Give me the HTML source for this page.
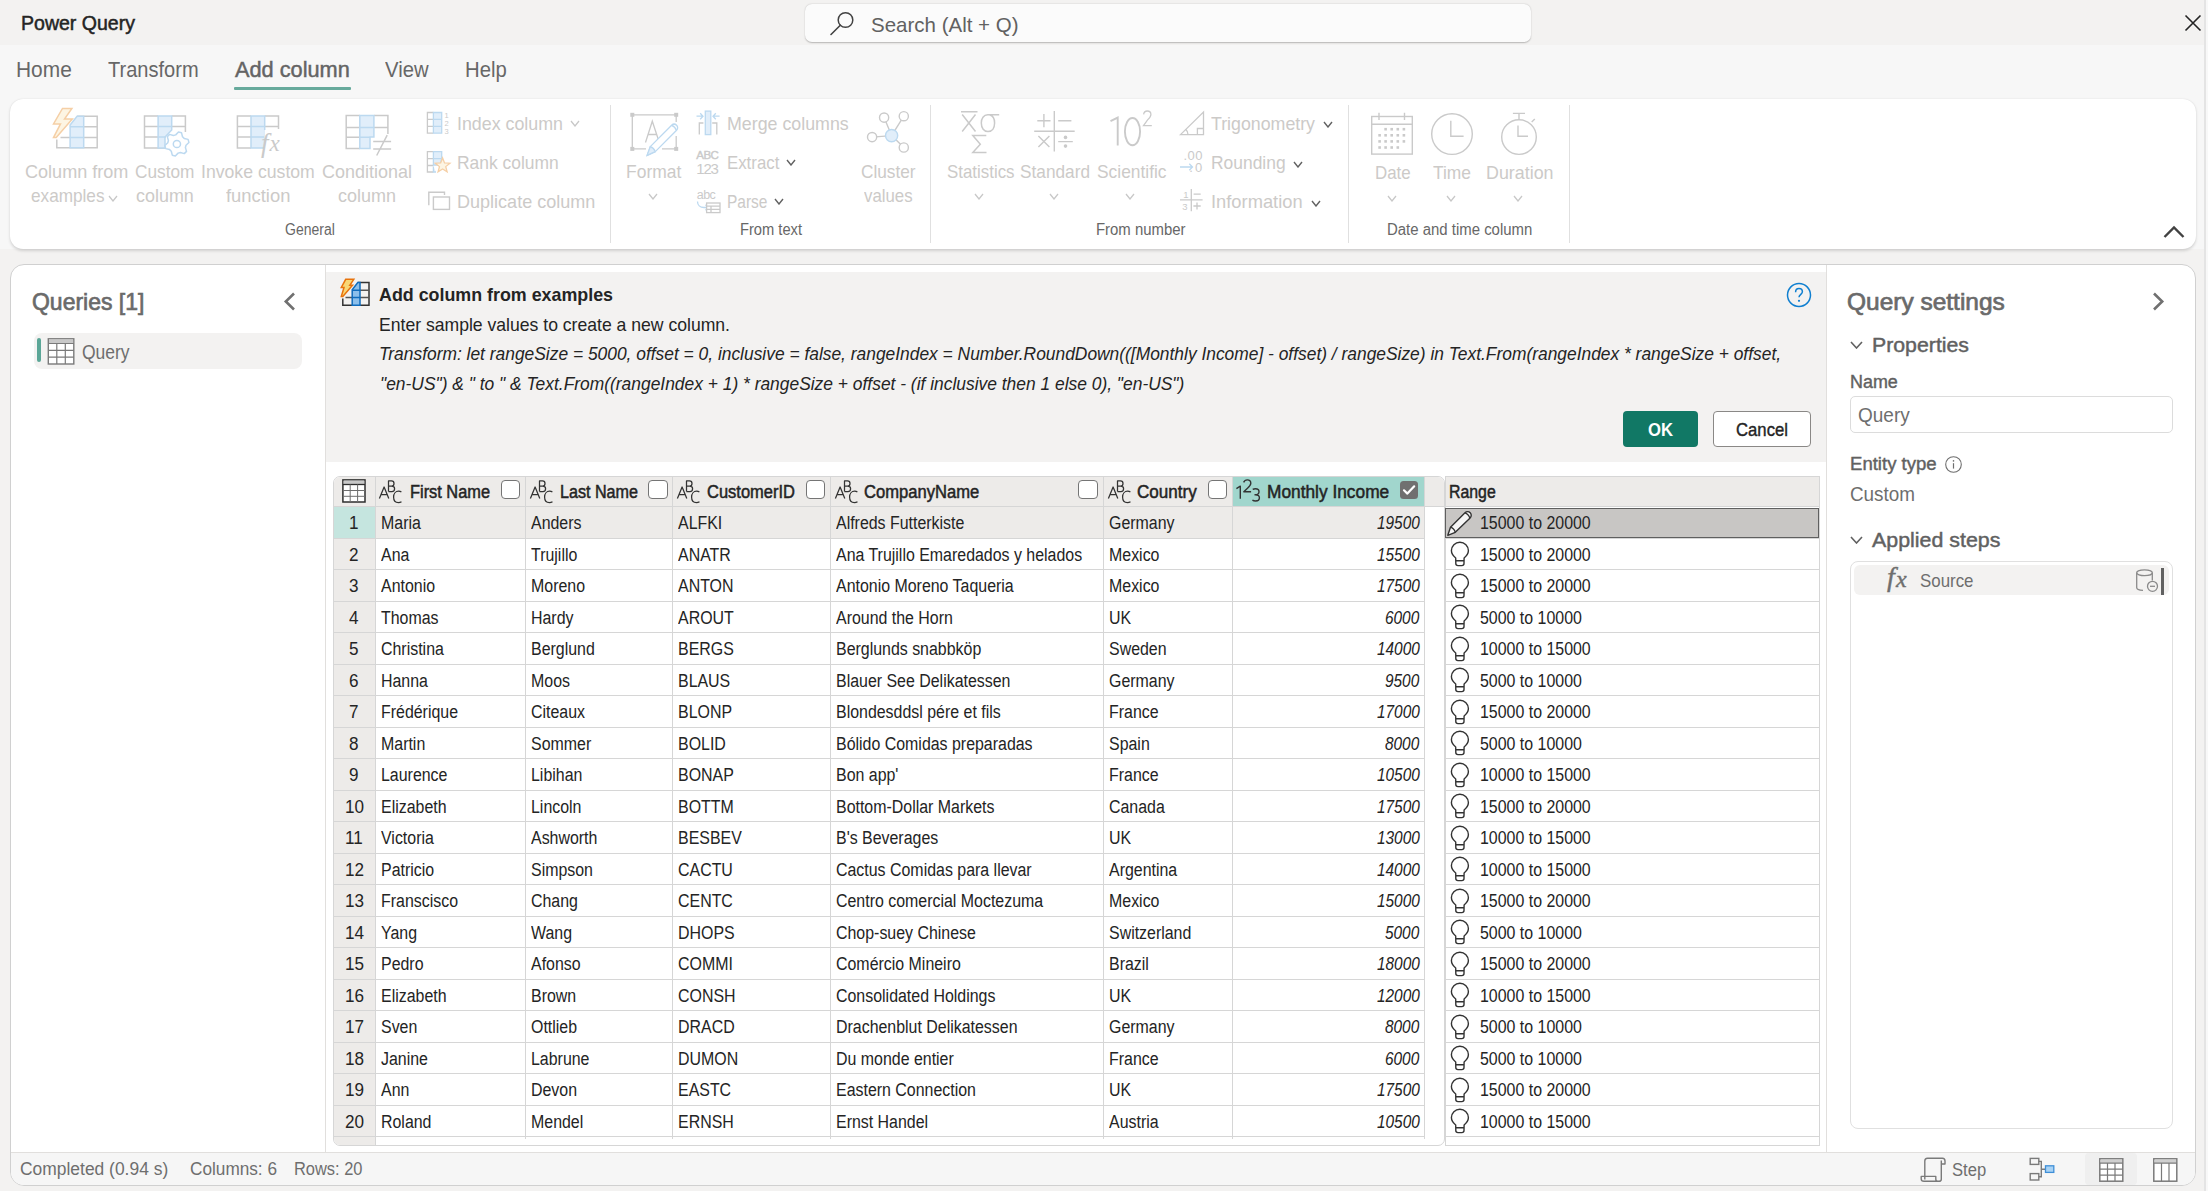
<!DOCTYPE html><html><head><meta charset="utf-8"><title>Power Query</title><style>
*{margin:0;padding:0}
html,body{width:2208px;height:1191px;overflow:hidden;background:#f3f2f1}
body{position:relative;font-family:"Liberation Sans",sans-serif}
body>div,body>svg{position:absolute}
.t{white-space:nowrap;line-height:1.117}
</style></head><body><div style="left:0.00px;top:0.00px;width:2208.00px;height:45.00px;background:#f3f2f1"></div>
<div style="left:0.00px;top:45.00px;width:2208.00px;height:204.00px;background:#f7f7f7"></div>
<div style="left:0.00px;top:249.00px;width:2208.00px;height:942.00px;background:#f3f2f1"></div>
<div style="left:2204.00px;top:0.00px;width:1.60px;height:1191.00px;background:#e4e4e4"></div>
<div style="left:2205.60px;top:0.00px;width:2.40px;height:1191.00px;background:#f8f8f8"></div>
<div class="t" style="left:21.00px;top:12.00px;font-size:20px;color:#242424;transform:scaleX(0.9768);transform-origin:0 0;-webkit-text-stroke:0.5px #242424;">Power Query</div>
<div style="left:804.50px;top:3.50px;width:726.00px;height:38.50px;background:#fbfbfb;border-radius:7px;box-shadow:0 0.5px 1.5px rgba(0,0,0,0.25);"></div>
<div class="t" style="left:871.00px;top:13.40px;font-size:21px;color:#616161;transform:scaleX(0.9760);transform-origin:0 0;">Search (Alt + Q)</div>
<svg style="left:2183.00px;top:13.00px;" width="20" height="20" viewBox="0 0 20 20" fill="none"><path d="M2.5 2.5 L17.5 17.5 M17.5 2.5 L2.5 17.5" stroke="#242424" stroke-width="1.6"/></svg>
<div class="t" style="left:15.60px;top:57.85px;font-size:21.5px;color:#676767;transform:scaleX(0.9730);transform-origin:0 0;">Home</div>
<div class="t" style="left:108.00px;top:57.85px;font-size:21.5px;color:#676767;transform:scaleX(0.9325);transform-origin:0 0;">Transform</div>
<div class="t" style="left:234.80px;top:57.85px;font-size:21.5px;color:#646464;transform:scaleX(1.0111);transform-origin:0 0;-webkit-text-stroke:0.45px #646464;">Add column</div>
<div class="t" style="left:384.80px;top:57.85px;font-size:21.5px;color:#676767;transform:scaleX(0.9413);transform-origin:0 0;">View</div>
<div class="t" style="left:464.50px;top:57.85px;font-size:21.5px;color:#676767;transform:scaleX(0.9431);transform-origin:0 0;">Help</div>
<div style="left:234.10px;top:87.00px;width:116.90px;height:3.00px;background:#67aa9c;border-radius:1px"></div>
<div style="left:10.00px;top:98.70px;width:2185.50px;height:150.40px;background:#fff;border-radius:13px;box-shadow:0 1.5px 3px rgba(0,0,0,0.14),0 0 1px rgba(0,0,0,0.10);"></div>
<div style="left:10.00px;top:264.30px;width:2186.00px;height:922.20px;background:#fff;border:1px solid #d0d0d0;border-radius:14px;box-sizing:border-box;overflow:hidden"></div>
<div class="t" style="left:25.20px;top:160.90px;font-size:19px;color:#cccac8;transform:scaleX(0.9508);transform-origin:0 0;">Column from</div>
<div class="t" style="left:31.40px;top:184.90px;font-size:19px;color:#cccac8;transform:scaleX(0.9039);transform-origin:0 0;">examples</div>
<div class="t" style="left:134.90px;top:160.90px;font-size:19px;color:#cccac8;transform:scaleX(0.9074);transform-origin:0 0;">Custom</div>
<div class="t" style="left:136.00px;top:184.90px;font-size:19px;color:#cccac8;transform:scaleX(0.9437);transform-origin:0 0;">column</div>
<div class="t" style="left:201.30px;top:160.90px;font-size:19px;color:#cccac8;transform:scaleX(0.9290);transform-origin:0 0;">Invoke custom</div>
<div class="t" style="left:226.00px;top:184.90px;font-size:19px;color:#cccac8;transform:scaleX(0.9677);transform-origin:0 0;">function</div>
<div class="t" style="left:321.90px;top:160.90px;font-size:19px;color:#cccac8;transform:scaleX(0.9457);transform-origin:0 0;">Conditional</div>
<div class="t" style="left:338.00px;top:184.90px;font-size:19px;color:#cccac8;transform:scaleX(0.9469);transform-origin:0 0;">column</div>
<div class="t" style="left:457.40px;top:112.90px;font-size:19px;color:#cccac8;transform:scaleX(0.9380);transform-origin:0 0;">Index column</div>
<div class="t" style="left:457.40px;top:151.90px;font-size:19px;color:#cccac8;transform:scaleX(0.9181);transform-origin:0 0;">Rank column</div>
<div class="t" style="left:457.40px;top:190.90px;font-size:19px;color:#cccac8;transform:scaleX(0.9490);transform-origin:0 0;">Duplicate column</div>
<div class="t" style="left:626.40px;top:160.90px;font-size:19px;color:#cccac8;transform:scaleX(0.9190);transform-origin:0 0;">Format</div>
<div class="t" style="left:727.30px;top:112.90px;font-size:19px;color:#cccac8;transform:scaleX(0.9370);transform-origin:0 0;">Merge columns</div>
<div class="t" style="left:727.30px;top:151.90px;font-size:19px;color:#cccac8;transform:scaleX(0.8846);transform-origin:0 0;">Extract</div>
<div class="t" style="left:727.30px;top:190.90px;font-size:19px;color:#cccac8;transform:scaleX(0.8140);transform-origin:0 0;">Parse</div>
<div class="t" style="left:861.00px;top:160.90px;font-size:19px;color:#cccac8;transform:scaleX(0.9072);transform-origin:0 0;">Cluster</div>
<div class="t" style="left:864.00px;top:184.90px;font-size:19px;color:#cccac8;transform:scaleX(0.8849);transform-origin:0 0;">values</div>
<div class="t" style="left:946.50px;top:160.90px;font-size:19px;color:#cccac8;transform:scaleX(0.8879);transform-origin:0 0;">Statistics</div>
<div class="t" style="left:1019.60px;top:160.90px;font-size:19px;color:#cccac8;transform:scaleX(0.9077);transform-origin:0 0;">Standard</div>
<div class="t" style="left:1096.50px;top:160.90px;font-size:19px;color:#cccac8;transform:scaleX(0.9141);transform-origin:0 0;">Scientific</div>
<div class="t" style="left:1211.40px;top:113.10px;font-size:19px;color:#cccac8;transform:scaleX(0.9351);transform-origin:0 0;">Trigonometry</div>
<div class="t" style="left:1211.40px;top:152.40px;font-size:19px;color:#cccac8;transform:scaleX(0.9171);transform-origin:0 0;">Rounding</div>
<div class="t" style="left:1211.40px;top:190.90px;font-size:19px;color:#cccac8;transform:scaleX(0.9637);transform-origin:0 0;">Information</div>
<div class="t" style="left:1374.70px;top:161.90px;font-size:19px;color:#cccac8;transform:scaleX(0.8895);transform-origin:0 0;">Date</div>
<div class="t" style="left:1433.00px;top:161.90px;font-size:19px;color:#cccac8;transform:scaleX(0.9153);transform-origin:0 0;">Time</div>
<div class="t" style="left:1485.50px;top:161.90px;font-size:19px;color:#cccac8;transform:scaleX(0.9399);transform-origin:0 0;">Duration</div>
<svg style="left:108.20px;top:194.50px;" width="10" height="7" viewBox="0 0 10 7" fill="none"><path d="M1 1 L5.0 6 L9 1" stroke="#c8c8c8" stroke-width="1.3" fill="none"/></svg>
<svg style="left:570.00px;top:120.00px;" width="10" height="7" viewBox="0 0 10 7" fill="none"><path d="M1 1 L5.0 6 L9 1" stroke="#c8c8c8" stroke-width="1.3" fill="none"/></svg>
<svg style="left:648.30px;top:192.50px;" width="10" height="7" viewBox="0 0 10 7" fill="none"><path d="M1 1 L5.0 6 L9 1" stroke="#c8c8c8" stroke-width="1.3" fill="none"/></svg>
<svg style="left:786.00px;top:159.00px;" width="10" height="7" viewBox="0 0 10 7" fill="none"><path d="M1 1 L5.0 6 L9 1" stroke="#616161" stroke-width="1.4" fill="none"/></svg>
<svg style="left:774.00px;top:197.50px;" width="10" height="7" viewBox="0 0 10 7" fill="none"><path d="M1 1 L5.0 6 L9 1" stroke="#616161" stroke-width="1.4" fill="none"/></svg>
<svg style="left:974.00px;top:193.00px;" width="10" height="7" viewBox="0 0 10 7" fill="none"><path d="M1 1 L5.0 6 L9 1" stroke="#c8c8c8" stroke-width="1.3" fill="none"/></svg>
<svg style="left:1048.70px;top:193.00px;" width="10" height="7" viewBox="0 0 10 7" fill="none"><path d="M1 1 L5.0 6 L9 1" stroke="#c8c8c8" stroke-width="1.3" fill="none"/></svg>
<svg style="left:1125.20px;top:193.00px;" width="10" height="7" viewBox="0 0 10 7" fill="none"><path d="M1 1 L5.0 6 L9 1" stroke="#c8c8c8" stroke-width="1.3" fill="none"/></svg>
<svg style="left:1323.00px;top:120.50px;" width="10" height="7" viewBox="0 0 10 7" fill="none"><path d="M1 1 L5.0 6 L9 1" stroke="#616161" stroke-width="1.4" fill="none"/></svg>
<svg style="left:1293.00px;top:160.50px;" width="10" height="7" viewBox="0 0 10 7" fill="none"><path d="M1 1 L5.0 6 L9 1" stroke="#616161" stroke-width="1.4" fill="none"/></svg>
<svg style="left:1310.60px;top:199.50px;" width="10" height="7" viewBox="0 0 10 7" fill="none"><path d="M1 1 L5.0 6 L9 1" stroke="#616161" stroke-width="1.4" fill="none"/></svg>
<svg style="left:1386.50px;top:195.00px;" width="10" height="7" viewBox="0 0 10 7" fill="none"><path d="M1 1 L5.0 6 L9 1" stroke="#c8c8c8" stroke-width="1.3" fill="none"/></svg>
<svg style="left:1446.00px;top:195.00px;" width="10" height="7" viewBox="0 0 10 7" fill="none"><path d="M1 1 L5.0 6 L9 1" stroke="#c8c8c8" stroke-width="1.3" fill="none"/></svg>
<svg style="left:1513.00px;top:195.00px;" width="10" height="7" viewBox="0 0 10 7" fill="none"><path d="M1 1 L5.0 6 L9 1" stroke="#c8c8c8" stroke-width="1.3" fill="none"/></svg>
<div class="t" style="left:285.30px;top:220.60px;font-size:16px;color:#676767;transform:scaleX(0.8749);transform-origin:0 0;">General</div>
<div class="t" style="left:740.00px;top:220.60px;font-size:16px;color:#676767;transform:scaleX(0.9177);transform-origin:0 0;">From text</div>
<div class="t" style="left:1095.50px;top:220.60px;font-size:16px;color:#676767;transform:scaleX(0.9321);transform-origin:0 0;">From number</div>
<div class="t" style="left:1387.00px;top:220.60px;font-size:16px;color:#676767;transform:scaleX(0.9336);transform-origin:0 0;">Date and time column</div>
<div style="left:609.90px;top:105.00px;width:1.20px;height:138.00px;background:#e0e0e0"></div>
<div style="left:930.10px;top:105.00px;width:1.20px;height:138.00px;background:#e0e0e0"></div>
<div style="left:1348.20px;top:105.00px;width:1.20px;height:138.00px;background:#e0e0e0"></div>
<div style="left:1569.00px;top:105.00px;width:1.20px;height:138.00px;background:#e0e0e0"></div>
<svg style="left:2162.00px;top:223.00px;" width="24" height="17" viewBox="0 0 24 17" fill="none"><path d="M2.5 14 L12 4.5 L21.5 14" stroke="#424242" stroke-width="2.4" fill="none"/></svg>
<div style="left:325.00px;top:265.00px;width:1.00px;height:887.00px;background:#e1dfdd"></div>
<div style="left:1826.00px;top:265.00px;width:1.00px;height:887.00px;background:#e1dfdd"></div>
<div style="left:11.00px;top:1152.00px;width:2184.00px;height:33.30px;background:#f6f6f6;border-top:1px solid #e1dfdd;box-sizing:border-box;border-radius:0 0 13px 13px"></div>
<div class="t" style="left:31.70px;top:288.90px;font-size:24px;color:#6a6a6a;transform:scaleX(0.9567);transform-origin:0 0;-webkit-text-stroke:0.7px #6a6a6a;">Queries [1]</div>
<svg style="left:282.00px;top:291.00px;" width="15" height="21" viewBox="0 0 15 21" fill="none"><path d="M12 2.5 L3.8 10.5 L12 18.5" stroke="#707070" stroke-width="2.6" fill="none"/></svg>
<div style="left:34.40px;top:333.00px;width:268.10px;height:35.50px;background:#f3f2f1;border-radius:8px"></div>
<div style="left:37.00px;top:338.00px;width:3.80px;height:24.00px;background:#5ba697;border-radius:2px"></div>
<div class="t" style="left:82.00px;top:341.00px;font-size:20px;color:#6e6e6e;transform:scaleX(0.8740);transform-origin:0 0;">Query</div>
<div style="left:326.00px;top:271.50px;width:1500.00px;height:190.00px;background:#f3f2f1"></div>
<div class="t" style="left:379.00px;top:283.90px;font-size:19px;color:#242424;font-weight:700;transform:scaleX(0.9391);transform-origin:0 0;">Add column from examples</div>
<div class="t" style="left:379.00px;top:314.55px;font-size:18.5px;color:#242424;transform:scaleX(0.9508);transform-origin:0 0;">Enter sample values to create a new column.</div>
<div class="t" style="left:379.00px;top:344.35px;font-size:18.5px;color:#242424;font-style:italic;transform:scaleX(0.9398);transform-origin:0 0;">Transform: let rangeSize = 5000, offset = 0, inclusive = false, rangeIndex = Number.RoundDown(([Monthly Income] - offset) / rangeSize) in Text.From(rangeIndex * rangeSize + offset,</div>
<div class="t" style="left:380.00px;top:373.85px;font-size:18.5px;color:#242424;font-style:italic;transform:scaleX(0.9406);transform-origin:0 0;">"en-US") &amp; " to " &amp; Text.From((rangeIndex + 1) * rangeSize + offset - (if inclusive then 1 else 0), "en-US")</div>
<div style="left:1623.00px;top:411.00px;width:74.50px;height:35.60px;background:#117865;border-radius:4px"></div>
<div class="t" style="left:1647.70px;top:419.40px;font-size:19px;color:#ffffff;font-weight:700;transform:scaleX(0.8772);transform-origin:0 0;">OK</div>
<div style="left:1713.00px;top:411.00px;width:97.50px;height:35.60px;background:#fff;border:1px solid #8a8886;border-radius:4px;box-sizing:border-box"></div>
<div class="t" style="left:1735.70px;top:419.40px;font-size:19px;color:#242424;transform:scaleX(0.8792);transform-origin:0 0;-webkit-text-stroke:0.4px #242424;">Cancel</div>
<svg style="left:1786.00px;top:282.00px;" width="26" height="26" viewBox="0 0 26 26" fill="none"><circle cx="13" cy="13" r="11.5" stroke="#0f7fd0" stroke-width="1.5"/><path d="M9.6 10.2 C9.6 7.9 11.2 6.6 13 6.6 C14.9 6.6 16.4 7.9 16.4 9.8 C16.4 12.3 13 12.4 13 15.3" stroke="#0f7fd0" stroke-width="1.5" fill="none"/><circle cx="13" cy="18.8" r="1.1" fill="#0f7fd0"/></svg>
<div class="t" style="left:1847.20px;top:289.40px;font-size:24px;color:#6a6a6a;transform:scaleX(1.0198);transform-origin:0 0;-webkit-text-stroke:0.7px #6a6a6a;">Query settings</div>
<svg style="left:2150.00px;top:291.00px;" width="17" height="21" viewBox="0 0 17 21" fill="none"><path d="M4 2.5 L12.2 10.5 L4 18.5" stroke="#707070" stroke-width="2.6" fill="none"/></svg>
<svg style="left:1849.50px;top:340.50px;" width="13" height="8" viewBox="0 0 13 8" fill="none"><path d="M1 1 L6.5 7 L12 1" stroke="#616161" stroke-width="1.6" fill="none"/></svg>
<div class="t" style="left:1872.00px;top:333.10px;font-size:21px;color:#616161;transform:scaleX(1.0135);transform-origin:0 0;-webkit-text-stroke:0.45px #616161;">Properties</div>
<div class="t" style="left:1850.20px;top:372.20px;font-size:18px;color:#616161;transform:scaleX(0.9955);transform-origin:0 0;-webkit-text-stroke:0.4px #616161;">Name</div>
<div style="left:1850.00px;top:396.00px;width:322.70px;height:37.00px;background:#fff;border:1px solid #dcdcdc;border-radius:5px;box-sizing:border-box"></div>
<div class="t" style="left:1858.40px;top:403.70px;font-size:20px;color:#6e6e6e;transform:scaleX(0.9493);transform-origin:0 0;">Query</div>
<div class="t" style="left:1850.20px;top:454.40px;font-size:18px;color:#616161;transform:scaleX(1.0316);transform-origin:0 0;-webkit-text-stroke:0.4px #616161;">Entity type</div>
<svg style="left:1944.00px;top:455.00px;" width="19" height="19" viewBox="0 0 19 19" fill="none"><circle cx="9.5" cy="9.5" r="7.8" stroke="#6e6e6e" stroke-width="1.1"/><path d="M9.5 8.2 V13.6" stroke="#6e6e6e" stroke-width="1.2"/><circle cx="9.5" cy="5.9" r="0.8" fill="#6e6e6e"/></svg>
<div class="t" style="left:1850.00px;top:483.00px;font-size:20px;color:#6e6e6e;transform:scaleX(0.9433);transform-origin:0 0;">Custom</div>
<svg style="left:1849.50px;top:535.50px;" width="13" height="8" viewBox="0 0 13 8" fill="none"><path d="M1 1 L6.5 7 L12 1" stroke="#616161" stroke-width="1.6" fill="none"/></svg>
<div class="t" style="left:1872.00px;top:528.10px;font-size:21px;color:#616161;transform:scaleX(1.0184);transform-origin:0 0;-webkit-text-stroke:0.45px #616161;">Applied steps</div>
<div style="left:1850.00px;top:561.30px;width:322.50px;height:568.20px;background:#fff;border:1px solid #e0e0e0;border-radius:8px;box-sizing:border-box"></div>
<div style="left:1854.00px;top:565.00px;width:315.00px;height:29.50px;background:#f3f2f1;border-radius:6px"></div>
<div class="t" style="left:1919.70px;top:569.90px;font-size:19px;color:#6e6e6e;transform:scaleX(0.8887);transform-origin:0 0;">Source</div>
<div style="left:2161.00px;top:568.00px;width:3.00px;height:27.00px;background:#616161"></div>
<div class="t" style="left:20.30px;top:1159.10px;font-size:18px;color:#6e6e6e;transform:scaleX(0.9682);transform-origin:0 0;">Completed (0.94 s)</div>
<div class="t" style="left:190.00px;top:1159.10px;font-size:18px;color:#6e6e6e;transform:scaleX(0.9556);transform-origin:0 0;">Columns: 6</div>
<div class="t" style="left:293.80px;top:1159.10px;font-size:18px;color:#6e6e6e;transform:scaleX(0.9129);transform-origin:0 0;">Rows: 20</div>
<div style="left:2084.50px;top:1153.00px;width:52.50px;height:32.00px;background:#efefef;border-radius:4px"></div>
<div style="left:332.50px;top:475.50px;width:1112.00px;height:670.00px;background:#fff;border:1px solid #d6d6d6;border-radius:7px;box-sizing:border-box;overflow:hidden"></div>
<div style="left:333.50px;top:476.50px;width:1110.00px;height:30.00px;background:#edebe9;border-radius:6px 6px 0 0"></div>
<div style="left:1232.40px;top:476.50px;width:192.00px;height:30.00px;background:#a1d6cd"></div>
<div style="left:333.50px;top:506.50px;width:41.80px;height:638.00px;background:#edebe9;border-radius:0 0 0 6px"></div>
<div style="left:333.50px;top:506.50px;width:41.80px;height:31.50px;background:#c5e5df"></div>
<div style="left:375.30px;top:506.50px;width:1049.10px;height:31.50px;background:#edebe9"></div>
<div style="left:333.50px;top:505.50px;width:1110.00px;height:1.00px;background:#d6d6d6"></div>
<div style="left:333.50px;top:538.00px;width:1090.90px;height:1.00px;background:#d6d6d6"></div>
<div style="left:333.50px;top:569.00px;width:1090.90px;height:1.00px;background:#d6d6d6"></div>
<div style="left:333.50px;top:601.00px;width:1090.90px;height:1.00px;background:#d6d6d6"></div>
<div style="left:333.50px;top:632.00px;width:1090.90px;height:1.00px;background:#d6d6d6"></div>
<div style="left:333.50px;top:664.00px;width:1090.90px;height:1.00px;background:#d6d6d6"></div>
<div style="left:333.50px;top:695.00px;width:1090.90px;height:1.00px;background:#d6d6d6"></div>
<div style="left:333.50px;top:727.00px;width:1090.90px;height:1.00px;background:#d6d6d6"></div>
<div style="left:333.50px;top:758.00px;width:1090.90px;height:1.00px;background:#d6d6d6"></div>
<div style="left:333.50px;top:790.00px;width:1090.90px;height:1.00px;background:#d6d6d6"></div>
<div style="left:333.50px;top:821.00px;width:1090.90px;height:1.00px;background:#d6d6d6"></div>
<div style="left:333.50px;top:853.00px;width:1090.90px;height:1.00px;background:#d6d6d6"></div>
<div style="left:333.50px;top:884.00px;width:1090.90px;height:1.00px;background:#d6d6d6"></div>
<div style="left:333.50px;top:916.00px;width:1090.90px;height:1.00px;background:#d6d6d6"></div>
<div style="left:333.50px;top:947.00px;width:1090.90px;height:1.00px;background:#d6d6d6"></div>
<div style="left:333.50px;top:979.00px;width:1090.90px;height:1.00px;background:#d6d6d6"></div>
<div style="left:333.50px;top:1010.00px;width:1090.90px;height:1.00px;background:#d6d6d6"></div>
<div style="left:333.50px;top:1042.00px;width:1090.90px;height:1.00px;background:#d6d6d6"></div>
<div style="left:333.50px;top:1073.00px;width:1090.90px;height:1.00px;background:#d6d6d6"></div>
<div style="left:333.50px;top:1105.00px;width:1090.90px;height:1.00px;background:#d6d6d6"></div>
<div style="left:333.50px;top:1136.00px;width:1090.90px;height:1.00px;background:#d6d6d6"></div>
<div style="left:374.80px;top:476.50px;width:1.00px;height:662.00px;background:#d6d6d6"></div>
<div style="left:525.00px;top:476.50px;width:1.00px;height:662.00px;background:#d6d6d6"></div>
<div style="left:672.00px;top:476.50px;width:1.00px;height:662.00px;background:#d6d6d6"></div>
<div style="left:830.00px;top:476.50px;width:1.00px;height:662.00px;background:#d6d6d6"></div>
<div style="left:1103.00px;top:476.50px;width:1.00px;height:662.00px;background:#d6d6d6"></div>
<div style="left:1231.90px;top:476.50px;width:1.00px;height:662.00px;background:#d6d6d6"></div>
<div style="left:1423.90px;top:476.50px;width:1.00px;height:662.00px;background:#d6d6d6"></div>
<div style="left:374.80px;top:1136.50px;width:1.00px;height:8.00px;background:#d6d6d6"></div>
<div style="left:1231.90px;top:1136.50px;width:1.00px;height:2.00px;background:#d6d6d6"></div>
<div class="t" style="left:349.44px;top:513.10px;font-size:18px;color:#242424;transform:scaleX(0.9500);transform-origin:0 0;">1</div>
<div class="t" style="left:380.60px;top:513.10px;font-size:18px;color:#242424;transform:scaleX(0.8850);transform-origin:0 0;">Maria</div>
<div class="t" style="left:530.80px;top:513.10px;font-size:18px;color:#242424;transform:scaleX(0.8850);transform-origin:0 0;">Anders</div>
<div class="t" style="left:677.80px;top:513.10px;font-size:18px;color:#242424;transform:scaleX(0.8850);transform-origin:0 0;">ALFKI</div>
<div class="t" style="left:835.80px;top:513.10px;font-size:18px;color:#242424;transform:scaleX(0.8850);transform-origin:0 0;">Alfreds Futterkiste</div>
<div class="t" style="left:1108.80px;top:513.10px;font-size:18px;color:#242424;transform:scaleX(0.8850);transform-origin:0 0;">Germany</div>
<div class="t" style="left:1376.50px;top:513.10px;font-size:18px;color:#242424;font-style:italic;transform:scaleX(0.8550);transform-origin:0 0;">19500</div>
<div class="t" style="left:349.44px;top:544.60px;font-size:18px;color:#242424;transform:scaleX(0.9500);transform-origin:0 0;">2</div>
<div class="t" style="left:380.60px;top:544.60px;font-size:18px;color:#242424;transform:scaleX(0.8850);transform-origin:0 0;">Ana</div>
<div class="t" style="left:530.80px;top:544.60px;font-size:18px;color:#242424;transform:scaleX(0.8850);transform-origin:0 0;">Trujillo</div>
<div class="t" style="left:677.80px;top:544.60px;font-size:18px;color:#242424;transform:scaleX(0.8850);transform-origin:0 0;">ANATR</div>
<div class="t" style="left:835.80px;top:544.60px;font-size:18px;color:#242424;transform:scaleX(0.8850);transform-origin:0 0;">Ana Trujillo Emaredados y helados</div>
<div class="t" style="left:1108.80px;top:544.60px;font-size:18px;color:#242424;transform:scaleX(0.8850);transform-origin:0 0;">Mexico</div>
<div class="t" style="left:1376.50px;top:544.60px;font-size:18px;color:#242424;font-style:italic;transform:scaleX(0.8550);transform-origin:0 0;">15500</div>
<div class="t" style="left:349.44px;top:576.10px;font-size:18px;color:#242424;transform:scaleX(0.9500);transform-origin:0 0;">3</div>
<div class="t" style="left:380.60px;top:576.10px;font-size:18px;color:#242424;transform:scaleX(0.8850);transform-origin:0 0;">Antonio</div>
<div class="t" style="left:530.80px;top:576.10px;font-size:18px;color:#242424;transform:scaleX(0.8850);transform-origin:0 0;">Moreno</div>
<div class="t" style="left:677.80px;top:576.10px;font-size:18px;color:#242424;transform:scaleX(0.8850);transform-origin:0 0;">ANTON</div>
<div class="t" style="left:835.80px;top:576.10px;font-size:18px;color:#242424;transform:scaleX(0.8850);transform-origin:0 0;">Antonio Moreno Taqueria</div>
<div class="t" style="left:1108.80px;top:576.10px;font-size:18px;color:#242424;transform:scaleX(0.8850);transform-origin:0 0;">Mexico</div>
<div class="t" style="left:1376.50px;top:576.10px;font-size:18px;color:#242424;font-style:italic;transform:scaleX(0.8550);transform-origin:0 0;">17500</div>
<div class="t" style="left:349.44px;top:607.60px;font-size:18px;color:#242424;transform:scaleX(0.9500);transform-origin:0 0;">4</div>
<div class="t" style="left:380.60px;top:607.60px;font-size:18px;color:#242424;transform:scaleX(0.8850);transform-origin:0 0;">Thomas</div>
<div class="t" style="left:530.80px;top:607.60px;font-size:18px;color:#242424;transform:scaleX(0.8850);transform-origin:0 0;">Hardy</div>
<div class="t" style="left:677.80px;top:607.60px;font-size:18px;color:#242424;transform:scaleX(0.8850);transform-origin:0 0;">AROUT</div>
<div class="t" style="left:835.80px;top:607.60px;font-size:18px;color:#242424;transform:scaleX(0.8850);transform-origin:0 0;">Around the Horn</div>
<div class="t" style="left:1108.80px;top:607.60px;font-size:18px;color:#242424;transform:scaleX(0.8850);transform-origin:0 0;">UK</div>
<div class="t" style="left:1385.06px;top:607.60px;font-size:18px;color:#242424;font-style:italic;transform:scaleX(0.8550);transform-origin:0 0;">6000</div>
<div class="t" style="left:349.44px;top:639.10px;font-size:18px;color:#242424;transform:scaleX(0.9500);transform-origin:0 0;">5</div>
<div class="t" style="left:380.60px;top:639.10px;font-size:18px;color:#242424;transform:scaleX(0.8850);transform-origin:0 0;">Christina</div>
<div class="t" style="left:530.80px;top:639.10px;font-size:18px;color:#242424;transform:scaleX(0.8850);transform-origin:0 0;">Berglund</div>
<div class="t" style="left:677.80px;top:639.10px;font-size:18px;color:#242424;transform:scaleX(0.8850);transform-origin:0 0;">BERGS</div>
<div class="t" style="left:835.80px;top:639.10px;font-size:18px;color:#242424;transform:scaleX(0.8850);transform-origin:0 0;">Berglunds snabbköp</div>
<div class="t" style="left:1108.80px;top:639.10px;font-size:18px;color:#242424;transform:scaleX(0.8850);transform-origin:0 0;">Sweden</div>
<div class="t" style="left:1376.50px;top:639.10px;font-size:18px;color:#242424;font-style:italic;transform:scaleX(0.8550);transform-origin:0 0;">14000</div>
<div class="t" style="left:349.44px;top:670.60px;font-size:18px;color:#242424;transform:scaleX(0.9500);transform-origin:0 0;">6</div>
<div class="t" style="left:380.60px;top:670.60px;font-size:18px;color:#242424;transform:scaleX(0.8850);transform-origin:0 0;">Hanna</div>
<div class="t" style="left:530.80px;top:670.60px;font-size:18px;color:#242424;transform:scaleX(0.8850);transform-origin:0 0;">Moos</div>
<div class="t" style="left:677.80px;top:670.60px;font-size:18px;color:#242424;transform:scaleX(0.8850);transform-origin:0 0;">BLAUS</div>
<div class="t" style="left:835.80px;top:670.60px;font-size:18px;color:#242424;transform:scaleX(0.8850);transform-origin:0 0;">Blauer See Delikatessen</div>
<div class="t" style="left:1108.80px;top:670.60px;font-size:18px;color:#242424;transform:scaleX(0.8850);transform-origin:0 0;">Germany</div>
<div class="t" style="left:1385.06px;top:670.60px;font-size:18px;color:#242424;font-style:italic;transform:scaleX(0.8550);transform-origin:0 0;">9500</div>
<div class="t" style="left:349.44px;top:702.10px;font-size:18px;color:#242424;transform:scaleX(0.9500);transform-origin:0 0;">7</div>
<div class="t" style="left:380.60px;top:702.10px;font-size:18px;color:#242424;transform:scaleX(0.8850);transform-origin:0 0;">Frédérique</div>
<div class="t" style="left:530.80px;top:702.10px;font-size:18px;color:#242424;transform:scaleX(0.8850);transform-origin:0 0;">Citeaux</div>
<div class="t" style="left:677.80px;top:702.10px;font-size:18px;color:#242424;transform:scaleX(0.8850);transform-origin:0 0;">BLONP</div>
<div class="t" style="left:835.80px;top:702.10px;font-size:18px;color:#242424;transform:scaleX(0.8850);transform-origin:0 0;">Blondesddsl pére et fils</div>
<div class="t" style="left:1108.80px;top:702.10px;font-size:18px;color:#242424;transform:scaleX(0.8850);transform-origin:0 0;">France</div>
<div class="t" style="left:1376.50px;top:702.10px;font-size:18px;color:#242424;font-style:italic;transform:scaleX(0.8550);transform-origin:0 0;">17000</div>
<div class="t" style="left:349.44px;top:733.60px;font-size:18px;color:#242424;transform:scaleX(0.9500);transform-origin:0 0;">8</div>
<div class="t" style="left:380.60px;top:733.60px;font-size:18px;color:#242424;transform:scaleX(0.8850);transform-origin:0 0;">Martin</div>
<div class="t" style="left:530.80px;top:733.60px;font-size:18px;color:#242424;transform:scaleX(0.8850);transform-origin:0 0;">Sommer</div>
<div class="t" style="left:677.80px;top:733.60px;font-size:18px;color:#242424;transform:scaleX(0.8850);transform-origin:0 0;">BOLID</div>
<div class="t" style="left:835.80px;top:733.60px;font-size:18px;color:#242424;transform:scaleX(0.8850);transform-origin:0 0;">Bólido Comidas preparadas</div>
<div class="t" style="left:1108.80px;top:733.60px;font-size:18px;color:#242424;transform:scaleX(0.8850);transform-origin:0 0;">Spain</div>
<div class="t" style="left:1385.06px;top:733.60px;font-size:18px;color:#242424;font-style:italic;transform:scaleX(0.8550);transform-origin:0 0;">8000</div>
<div class="t" style="left:349.44px;top:765.10px;font-size:18px;color:#242424;transform:scaleX(0.9500);transform-origin:0 0;">9</div>
<div class="t" style="left:380.60px;top:765.10px;font-size:18px;color:#242424;transform:scaleX(0.8850);transform-origin:0 0;">Laurence</div>
<div class="t" style="left:530.80px;top:765.10px;font-size:18px;color:#242424;transform:scaleX(0.8850);transform-origin:0 0;">Libihan</div>
<div class="t" style="left:677.80px;top:765.10px;font-size:18px;color:#242424;transform:scaleX(0.8850);transform-origin:0 0;">BONAP</div>
<div class="t" style="left:835.80px;top:765.10px;font-size:18px;color:#242424;transform:scaleX(0.8850);transform-origin:0 0;">Bon app'</div>
<div class="t" style="left:1108.80px;top:765.10px;font-size:18px;color:#242424;transform:scaleX(0.8850);transform-origin:0 0;">France</div>
<div class="t" style="left:1376.50px;top:765.10px;font-size:18px;color:#242424;font-style:italic;transform:scaleX(0.8550);transform-origin:0 0;">10500</div>
<div class="t" style="left:344.69px;top:796.60px;font-size:18px;color:#242424;transform:scaleX(0.9500);transform-origin:0 0;">10</div>
<div class="t" style="left:380.60px;top:796.60px;font-size:18px;color:#242424;transform:scaleX(0.8850);transform-origin:0 0;">Elizabeth</div>
<div class="t" style="left:530.80px;top:796.60px;font-size:18px;color:#242424;transform:scaleX(0.8850);transform-origin:0 0;">Lincoln</div>
<div class="t" style="left:677.80px;top:796.60px;font-size:18px;color:#242424;transform:scaleX(0.8850);transform-origin:0 0;">BOTTM</div>
<div class="t" style="left:835.80px;top:796.60px;font-size:18px;color:#242424;transform:scaleX(0.8850);transform-origin:0 0;">Bottom-Dollar Markets</div>
<div class="t" style="left:1108.80px;top:796.60px;font-size:18px;color:#242424;transform:scaleX(0.8850);transform-origin:0 0;">Canada</div>
<div class="t" style="left:1376.50px;top:796.60px;font-size:18px;color:#242424;font-style:italic;transform:scaleX(0.8550);transform-origin:0 0;">17500</div>
<div class="t" style="left:345.32px;top:828.10px;font-size:18px;color:#242424;transform:scaleX(0.9500);transform-origin:0 0;">11</div>
<div class="t" style="left:380.60px;top:828.10px;font-size:18px;color:#242424;transform:scaleX(0.8850);transform-origin:0 0;">Victoria</div>
<div class="t" style="left:530.80px;top:828.10px;font-size:18px;color:#242424;transform:scaleX(0.8850);transform-origin:0 0;">Ashworth</div>
<div class="t" style="left:677.80px;top:828.10px;font-size:18px;color:#242424;transform:scaleX(0.8850);transform-origin:0 0;">BESBEV</div>
<div class="t" style="left:835.80px;top:828.10px;font-size:18px;color:#242424;transform:scaleX(0.8850);transform-origin:0 0;">B's Beverages</div>
<div class="t" style="left:1108.80px;top:828.10px;font-size:18px;color:#242424;transform:scaleX(0.8850);transform-origin:0 0;">UK</div>
<div class="t" style="left:1376.50px;top:828.10px;font-size:18px;color:#242424;font-style:italic;transform:scaleX(0.8550);transform-origin:0 0;">13000</div>
<div class="t" style="left:344.69px;top:859.60px;font-size:18px;color:#242424;transform:scaleX(0.9500);transform-origin:0 0;">12</div>
<div class="t" style="left:380.60px;top:859.60px;font-size:18px;color:#242424;transform:scaleX(0.8850);transform-origin:0 0;">Patricio</div>
<div class="t" style="left:530.80px;top:859.60px;font-size:18px;color:#242424;transform:scaleX(0.8850);transform-origin:0 0;">Simpson</div>
<div class="t" style="left:677.80px;top:859.60px;font-size:18px;color:#242424;transform:scaleX(0.8850);transform-origin:0 0;">CACTU</div>
<div class="t" style="left:835.80px;top:859.60px;font-size:18px;color:#242424;transform:scaleX(0.8850);transform-origin:0 0;">Cactus Comidas para llevar</div>
<div class="t" style="left:1108.80px;top:859.60px;font-size:18px;color:#242424;transform:scaleX(0.8850);transform-origin:0 0;">Argentina</div>
<div class="t" style="left:1376.50px;top:859.60px;font-size:18px;color:#242424;font-style:italic;transform:scaleX(0.8550);transform-origin:0 0;">14000</div>
<div class="t" style="left:344.69px;top:891.10px;font-size:18px;color:#242424;transform:scaleX(0.9500);transform-origin:0 0;">13</div>
<div class="t" style="left:380.60px;top:891.10px;font-size:18px;color:#242424;transform:scaleX(0.8850);transform-origin:0 0;">Franscisco</div>
<div class="t" style="left:530.80px;top:891.10px;font-size:18px;color:#242424;transform:scaleX(0.8850);transform-origin:0 0;">Chang</div>
<div class="t" style="left:677.80px;top:891.10px;font-size:18px;color:#242424;transform:scaleX(0.8850);transform-origin:0 0;">CENTC</div>
<div class="t" style="left:835.80px;top:891.10px;font-size:18px;color:#242424;transform:scaleX(0.8850);transform-origin:0 0;">Centro comercial Moctezuma</div>
<div class="t" style="left:1108.80px;top:891.10px;font-size:18px;color:#242424;transform:scaleX(0.8850);transform-origin:0 0;">Mexico</div>
<div class="t" style="left:1376.50px;top:891.10px;font-size:18px;color:#242424;font-style:italic;transform:scaleX(0.8550);transform-origin:0 0;">15000</div>
<div class="t" style="left:344.69px;top:922.60px;font-size:18px;color:#242424;transform:scaleX(0.9500);transform-origin:0 0;">14</div>
<div class="t" style="left:380.60px;top:922.60px;font-size:18px;color:#242424;transform:scaleX(0.8850);transform-origin:0 0;">Yang</div>
<div class="t" style="left:530.80px;top:922.60px;font-size:18px;color:#242424;transform:scaleX(0.8850);transform-origin:0 0;">Wang</div>
<div class="t" style="left:677.80px;top:922.60px;font-size:18px;color:#242424;transform:scaleX(0.8850);transform-origin:0 0;">DHOPS</div>
<div class="t" style="left:835.80px;top:922.60px;font-size:18px;color:#242424;transform:scaleX(0.8850);transform-origin:0 0;">Chop-suey Chinese</div>
<div class="t" style="left:1108.80px;top:922.60px;font-size:18px;color:#242424;transform:scaleX(0.8850);transform-origin:0 0;">Switzerland</div>
<div class="t" style="left:1385.06px;top:922.60px;font-size:18px;color:#242424;font-style:italic;transform:scaleX(0.8550);transform-origin:0 0;">5000</div>
<div class="t" style="left:344.69px;top:954.10px;font-size:18px;color:#242424;transform:scaleX(0.9500);transform-origin:0 0;">15</div>
<div class="t" style="left:380.60px;top:954.10px;font-size:18px;color:#242424;transform:scaleX(0.8850);transform-origin:0 0;">Pedro</div>
<div class="t" style="left:530.80px;top:954.10px;font-size:18px;color:#242424;transform:scaleX(0.8850);transform-origin:0 0;">Afonso</div>
<div class="t" style="left:677.80px;top:954.10px;font-size:18px;color:#242424;transform:scaleX(0.8850);transform-origin:0 0;">COMMI</div>
<div class="t" style="left:835.80px;top:954.10px;font-size:18px;color:#242424;transform:scaleX(0.8850);transform-origin:0 0;">Comércio Mineiro</div>
<div class="t" style="left:1108.80px;top:954.10px;font-size:18px;color:#242424;transform:scaleX(0.8850);transform-origin:0 0;">Brazil</div>
<div class="t" style="left:1376.50px;top:954.10px;font-size:18px;color:#242424;font-style:italic;transform:scaleX(0.8550);transform-origin:0 0;">18000</div>
<div class="t" style="left:344.69px;top:985.60px;font-size:18px;color:#242424;transform:scaleX(0.9500);transform-origin:0 0;">16</div>
<div class="t" style="left:380.60px;top:985.60px;font-size:18px;color:#242424;transform:scaleX(0.8850);transform-origin:0 0;">Elizabeth</div>
<div class="t" style="left:530.80px;top:985.60px;font-size:18px;color:#242424;transform:scaleX(0.8850);transform-origin:0 0;">Brown</div>
<div class="t" style="left:677.80px;top:985.60px;font-size:18px;color:#242424;transform:scaleX(0.8850);transform-origin:0 0;">CONSH</div>
<div class="t" style="left:835.80px;top:985.60px;font-size:18px;color:#242424;transform:scaleX(0.8850);transform-origin:0 0;">Consolidated Holdings</div>
<div class="t" style="left:1108.80px;top:985.60px;font-size:18px;color:#242424;transform:scaleX(0.8850);transform-origin:0 0;">UK</div>
<div class="t" style="left:1376.50px;top:985.60px;font-size:18px;color:#242424;font-style:italic;transform:scaleX(0.8550);transform-origin:0 0;">12000</div>
<div class="t" style="left:344.69px;top:1017.10px;font-size:18px;color:#242424;transform:scaleX(0.9500);transform-origin:0 0;">17</div>
<div class="t" style="left:380.60px;top:1017.10px;font-size:18px;color:#242424;transform:scaleX(0.8850);transform-origin:0 0;">Sven</div>
<div class="t" style="left:530.80px;top:1017.10px;font-size:18px;color:#242424;transform:scaleX(0.8850);transform-origin:0 0;">Ottlieb</div>
<div class="t" style="left:677.80px;top:1017.10px;font-size:18px;color:#242424;transform:scaleX(0.8850);transform-origin:0 0;">DRACD</div>
<div class="t" style="left:835.80px;top:1017.10px;font-size:18px;color:#242424;transform:scaleX(0.8850);transform-origin:0 0;">Drachenblut Delikatessen</div>
<div class="t" style="left:1108.80px;top:1017.10px;font-size:18px;color:#242424;transform:scaleX(0.8850);transform-origin:0 0;">Germany</div>
<div class="t" style="left:1385.06px;top:1017.10px;font-size:18px;color:#242424;font-style:italic;transform:scaleX(0.8550);transform-origin:0 0;">8000</div>
<div class="t" style="left:344.69px;top:1048.60px;font-size:18px;color:#242424;transform:scaleX(0.9500);transform-origin:0 0;">18</div>
<div class="t" style="left:380.60px;top:1048.60px;font-size:18px;color:#242424;transform:scaleX(0.8850);transform-origin:0 0;">Janine</div>
<div class="t" style="left:530.80px;top:1048.60px;font-size:18px;color:#242424;transform:scaleX(0.8850);transform-origin:0 0;">Labrune</div>
<div class="t" style="left:677.80px;top:1048.60px;font-size:18px;color:#242424;transform:scaleX(0.8850);transform-origin:0 0;">DUMON</div>
<div class="t" style="left:835.80px;top:1048.60px;font-size:18px;color:#242424;transform:scaleX(0.8850);transform-origin:0 0;">Du monde entier</div>
<div class="t" style="left:1108.80px;top:1048.60px;font-size:18px;color:#242424;transform:scaleX(0.8850);transform-origin:0 0;">France</div>
<div class="t" style="left:1385.06px;top:1048.60px;font-size:18px;color:#242424;font-style:italic;transform:scaleX(0.8550);transform-origin:0 0;">6000</div>
<div class="t" style="left:344.69px;top:1080.10px;font-size:18px;color:#242424;transform:scaleX(0.9500);transform-origin:0 0;">19</div>
<div class="t" style="left:380.60px;top:1080.10px;font-size:18px;color:#242424;transform:scaleX(0.8850);transform-origin:0 0;">Ann</div>
<div class="t" style="left:530.80px;top:1080.10px;font-size:18px;color:#242424;transform:scaleX(0.8850);transform-origin:0 0;">Devon</div>
<div class="t" style="left:677.80px;top:1080.10px;font-size:18px;color:#242424;transform:scaleX(0.8850);transform-origin:0 0;">EASTC</div>
<div class="t" style="left:835.80px;top:1080.10px;font-size:18px;color:#242424;transform:scaleX(0.8850);transform-origin:0 0;">Eastern Connection</div>
<div class="t" style="left:1108.80px;top:1080.10px;font-size:18px;color:#242424;transform:scaleX(0.8850);transform-origin:0 0;">UK</div>
<div class="t" style="left:1376.50px;top:1080.10px;font-size:18px;color:#242424;font-style:italic;transform:scaleX(0.8550);transform-origin:0 0;">17500</div>
<div class="t" style="left:344.69px;top:1111.60px;font-size:18px;color:#242424;transform:scaleX(0.9500);transform-origin:0 0;">20</div>
<div class="t" style="left:380.60px;top:1111.60px;font-size:18px;color:#242424;transform:scaleX(0.8850);transform-origin:0 0;">Roland</div>
<div class="t" style="left:530.80px;top:1111.60px;font-size:18px;color:#242424;transform:scaleX(0.8850);transform-origin:0 0;">Mendel</div>
<div class="t" style="left:677.80px;top:1111.60px;font-size:18px;color:#242424;transform:scaleX(0.8850);transform-origin:0 0;">ERNSH</div>
<div class="t" style="left:835.80px;top:1111.60px;font-size:18px;color:#242424;transform:scaleX(0.8850);transform-origin:0 0;">Ernst Handel</div>
<div class="t" style="left:1108.80px;top:1111.60px;font-size:18px;color:#242424;transform:scaleX(0.8850);transform-origin:0 0;">Austria</div>
<div class="t" style="left:1376.50px;top:1111.60px;font-size:18px;color:#242424;font-style:italic;transform:scaleX(0.8550);transform-origin:0 0;">10500</div>
<div style="left:1444.50px;top:475.50px;width:375.20px;height:670.00px;background:#fff;border:1px solid #d6d6d6;box-sizing:border-box"></div>
<div style="left:1445.50px;top:476.50px;width:373.20px;height:30.00px;background:#edebe9"></div>
<div style="left:1445.50px;top:505.50px;width:373.20px;height:1.00px;background:#d6d6d6"></div>
<div style="left:1445.50px;top:538.00px;width:373.20px;height:1.00px;background:#d6d6d6"></div>
<div style="left:1445.50px;top:569.00px;width:373.20px;height:1.00px;background:#d6d6d6"></div>
<div style="left:1445.50px;top:601.00px;width:373.20px;height:1.00px;background:#d6d6d6"></div>
<div style="left:1445.50px;top:632.00px;width:373.20px;height:1.00px;background:#d6d6d6"></div>
<div style="left:1445.50px;top:664.00px;width:373.20px;height:1.00px;background:#d6d6d6"></div>
<div style="left:1445.50px;top:695.00px;width:373.20px;height:1.00px;background:#d6d6d6"></div>
<div style="left:1445.50px;top:727.00px;width:373.20px;height:1.00px;background:#d6d6d6"></div>
<div style="left:1445.50px;top:758.00px;width:373.20px;height:1.00px;background:#d6d6d6"></div>
<div style="left:1445.50px;top:790.00px;width:373.20px;height:1.00px;background:#d6d6d6"></div>
<div style="left:1445.50px;top:821.00px;width:373.20px;height:1.00px;background:#d6d6d6"></div>
<div style="left:1445.50px;top:853.00px;width:373.20px;height:1.00px;background:#d6d6d6"></div>
<div style="left:1445.50px;top:884.00px;width:373.20px;height:1.00px;background:#d6d6d6"></div>
<div style="left:1445.50px;top:916.00px;width:373.20px;height:1.00px;background:#d6d6d6"></div>
<div style="left:1445.50px;top:947.00px;width:373.20px;height:1.00px;background:#d6d6d6"></div>
<div style="left:1445.50px;top:979.00px;width:373.20px;height:1.00px;background:#d6d6d6"></div>
<div style="left:1445.50px;top:1010.00px;width:373.20px;height:1.00px;background:#d6d6d6"></div>
<div style="left:1445.50px;top:1042.00px;width:373.20px;height:1.00px;background:#d6d6d6"></div>
<div style="left:1445.50px;top:1073.00px;width:373.20px;height:1.00px;background:#d6d6d6"></div>
<div style="left:1445.50px;top:1105.00px;width:373.20px;height:1.00px;background:#d6d6d6"></div>
<div style="left:1445.50px;top:1136.00px;width:373.20px;height:1.00px;background:#d6d6d6"></div>
<div style="left:1445.00px;top:508.00px;width:374.20px;height:29.50px;background:#c8c6c4;border:1.5px solid #5f5f5f;box-sizing:border-box"></div>
<div class="t" style="left:1448.50px;top:482.10px;font-size:18px;color:#242424;transform:scaleX(0.8804);transform-origin:0 0;-webkit-text-stroke:0.5px #242424;">Range</div>
<div class="t" style="left:1480.40px;top:513.10px;font-size:18px;color:#242424;transform:scaleX(0.8850);transform-origin:0 0;">15000 to 20000</div>
<div class="t" style="left:1480.40px;top:544.60px;font-size:18px;color:#242424;transform:scaleX(0.8850);transform-origin:0 0;">15000 to 20000</div>
<div class="t" style="left:1480.40px;top:576.10px;font-size:18px;color:#242424;transform:scaleX(0.8850);transform-origin:0 0;">15000 to 20000</div>
<div class="t" style="left:1480.40px;top:607.60px;font-size:18px;color:#242424;transform:scaleX(0.8850);transform-origin:0 0;">5000 to 10000</div>
<div class="t" style="left:1480.40px;top:639.10px;font-size:18px;color:#242424;transform:scaleX(0.8850);transform-origin:0 0;">10000 to 15000</div>
<div class="t" style="left:1480.40px;top:670.60px;font-size:18px;color:#242424;transform:scaleX(0.8850);transform-origin:0 0;">5000 to 10000</div>
<div class="t" style="left:1480.40px;top:702.10px;font-size:18px;color:#242424;transform:scaleX(0.8850);transform-origin:0 0;">15000 to 20000</div>
<div class="t" style="left:1480.40px;top:733.60px;font-size:18px;color:#242424;transform:scaleX(0.8850);transform-origin:0 0;">5000 to 10000</div>
<div class="t" style="left:1480.40px;top:765.10px;font-size:18px;color:#242424;transform:scaleX(0.8850);transform-origin:0 0;">10000 to 15000</div>
<div class="t" style="left:1480.40px;top:796.60px;font-size:18px;color:#242424;transform:scaleX(0.8850);transform-origin:0 0;">15000 to 20000</div>
<div class="t" style="left:1480.40px;top:828.10px;font-size:18px;color:#242424;transform:scaleX(0.8850);transform-origin:0 0;">10000 to 15000</div>
<div class="t" style="left:1480.40px;top:859.60px;font-size:18px;color:#242424;transform:scaleX(0.8850);transform-origin:0 0;">10000 to 15000</div>
<div class="t" style="left:1480.40px;top:891.10px;font-size:18px;color:#242424;transform:scaleX(0.8850);transform-origin:0 0;">15000 to 20000</div>
<div class="t" style="left:1480.40px;top:922.60px;font-size:18px;color:#242424;transform:scaleX(0.8850);transform-origin:0 0;">5000 to 10000</div>
<div class="t" style="left:1480.40px;top:954.10px;font-size:18px;color:#242424;transform:scaleX(0.8850);transform-origin:0 0;">15000 to 20000</div>
<div class="t" style="left:1480.40px;top:985.60px;font-size:18px;color:#242424;transform:scaleX(0.8850);transform-origin:0 0;">10000 to 15000</div>
<div class="t" style="left:1480.40px;top:1017.10px;font-size:18px;color:#242424;transform:scaleX(0.8850);transform-origin:0 0;">5000 to 10000</div>
<div class="t" style="left:1480.40px;top:1048.60px;font-size:18px;color:#242424;transform:scaleX(0.8850);transform-origin:0 0;">5000 to 10000</div>
<div class="t" style="left:1480.40px;top:1080.10px;font-size:18px;color:#242424;transform:scaleX(0.8850);transform-origin:0 0;">15000 to 20000</div>
<div class="t" style="left:1480.40px;top:1111.60px;font-size:18px;color:#242424;transform:scaleX(0.8850);transform-origin:0 0;">10000 to 15000</div>
<div class="t" style="left:410.00px;top:481.80px;font-size:18px;color:#242424;transform:scaleX(0.9090);transform-origin:0 0;-webkit-text-stroke:0.5px #242424;">First Name</div>
<div class="t" style="left:560.20px;top:481.80px;font-size:18px;color:#242424;transform:scaleX(0.8962);transform-origin:0 0;-webkit-text-stroke:0.5px #242424;">Last Name</div>
<div class="t" style="left:706.90px;top:481.80px;font-size:18px;color:#242424;transform:scaleX(0.9165);transform-origin:0 0;-webkit-text-stroke:0.5px #242424;">CustomerID</div>
<div class="t" style="left:864.20px;top:481.80px;font-size:18px;color:#242424;transform:scaleX(0.9212);transform-origin:0 0;-webkit-text-stroke:0.5px #242424;">CompanyName</div>
<div class="t" style="left:1137.30px;top:481.80px;font-size:18px;color:#242424;transform:scaleX(0.9472);transform-origin:0 0;-webkit-text-stroke:0.5px #242424;">Country</div>
<div class="t" style="left:1266.60px;top:481.80px;font-size:18px;color:#242424;transform:scaleX(0.9618);transform-origin:0 0;-webkit-text-stroke:0.5px #242424;">Monthly Income</div>
<svg style="left:341.00px;top:478.00px;" width="26" height="26" viewBox="0 0 26 26" fill="none"><rect x="1.9" y="1.9" width="22.1" height="22.1" fill="#fff" stroke="#2e2e2e" stroke-width="1.5"/><rect x="2.6" y="2.6" width="20.7" height="3.7" fill="#c8c8c8"/><path d="M1.9 6.5 H24" stroke="#2e2e2e" stroke-width="1.3"/><path d="M1.9 12.5 H24 M1.9 18.3 H24 M9.2 6.5 V24 M16.6 6.5 V24" stroke="#6e6e6e" stroke-width="1"/></svg>
<svg style="left:378.20px;top:479.00px;" width="26" height="26" viewBox="0 0 26 26" fill="none"><g stroke="#333" stroke-width="1.25" fill="none" stroke-linejoin="round"><path d="M1.4 19.6 L6.1 8 L10.8 19.6 M3 15.6 H9.2"/><path d="M10.5 12.5 V1.9 H13.5 C15.2 1.9 16 2.9 16 4.4 C16 6 15 7 13.6 7 H10.5 M13.6 7 C15.5 7 16.6 8 16.6 9.7 C16.6 11.4 15.5 12.5 13.9 12.5 H10.5"/><path d="M23.4 13 C22.6 12.4 21.6 12.2 20.6 12.2 C17.7 12.2 15.6 14.5 15.6 18 C15.6 21.4 17.6 23.6 20.4 23.6 C21.6 23.6 22.6 23.3 23.5 22.7"/></g></svg>
<svg style="left:528.60px;top:479.00px;" width="26" height="26" viewBox="0 0 26 26" fill="none"><g stroke="#333" stroke-width="1.25" fill="none" stroke-linejoin="round"><path d="M1.4 19.6 L6.1 8 L10.8 19.6 M3 15.6 H9.2"/><path d="M10.5 12.5 V1.9 H13.5 C15.2 1.9 16 2.9 16 4.4 C16 6 15 7 13.6 7 H10.5 M13.6 7 C15.5 7 16.6 8 16.6 9.7 C16.6 11.4 15.5 12.5 13.9 12.5 H10.5"/><path d="M23.4 13 C22.6 12.4 21.6 12.2 20.6 12.2 C17.7 12.2 15.6 14.5 15.6 18 C15.6 21.4 17.6 23.6 20.4 23.6 C21.6 23.6 22.6 23.3 23.5 22.7"/></g></svg>
<svg style="left:675.70px;top:479.00px;" width="26" height="26" viewBox="0 0 26 26" fill="none"><g stroke="#333" stroke-width="1.25" fill="none" stroke-linejoin="round"><path d="M1.4 19.6 L6.1 8 L10.8 19.6 M3 15.6 H9.2"/><path d="M10.5 12.5 V1.9 H13.5 C15.2 1.9 16 2.9 16 4.4 C16 6 15 7 13.6 7 H10.5 M13.6 7 C15.5 7 16.6 8 16.6 9.7 C16.6 11.4 15.5 12.5 13.9 12.5 H10.5"/><path d="M23.4 13 C22.6 12.4 21.6 12.2 20.6 12.2 C17.7 12.2 15.6 14.5 15.6 18 C15.6 21.4 17.6 23.6 20.4 23.6 C21.6 23.6 22.6 23.3 23.5 22.7"/></g></svg>
<svg style="left:833.60px;top:479.00px;" width="26" height="26" viewBox="0 0 26 26" fill="none"><g stroke="#333" stroke-width="1.25" fill="none" stroke-linejoin="round"><path d="M1.4 19.6 L6.1 8 L10.8 19.6 M3 15.6 H9.2"/><path d="M10.5 12.5 V1.9 H13.5 C15.2 1.9 16 2.9 16 4.4 C16 6 15 7 13.6 7 H10.5 M13.6 7 C15.5 7 16.6 8 16.6 9.7 C16.6 11.4 15.5 12.5 13.9 12.5 H10.5"/><path d="M23.4 13 C22.6 12.4 21.6 12.2 20.6 12.2 C17.7 12.2 15.6 14.5 15.6 18 C15.6 21.4 17.6 23.6 20.4 23.6 C21.6 23.6 22.6 23.3 23.5 22.7"/></g></svg>
<svg style="left:1106.70px;top:479.00px;" width="26" height="26" viewBox="0 0 26 26" fill="none"><g stroke="#333" stroke-width="1.25" fill="none" stroke-linejoin="round"><path d="M1.4 19.6 L6.1 8 L10.8 19.6 M3 15.6 H9.2"/><path d="M10.5 12.5 V1.9 H13.5 C15.2 1.9 16 2.9 16 4.4 C16 6 15 7 13.6 7 H10.5 M13.6 7 C15.5 7 16.6 8 16.6 9.7 C16.6 11.4 15.5 12.5 13.9 12.5 H10.5"/><path d="M23.4 13 C22.6 12.4 21.6 12.2 20.6 12.2 C17.7 12.2 15.6 14.5 15.6 18 C15.6 21.4 17.6 23.6 20.4 23.6 C21.6 23.6 22.6 23.3 23.5 22.7"/></g></svg>
<svg style="left:1234.00px;top:478.00px;" width="28" height="26" viewBox="0 0 28 26" fill="none"><g stroke="#333" stroke-width="1.4" fill="none" stroke-linejoin="round"><path d="M2.4 10.6 L6.3 8.2 V20.8"/><path d="M9.6 4.4 C10.3 2.8 11.7 1.9 13.3 1.9 C15.3 1.9 16.8 3.2 16.8 5.2 C16.8 7.2 15.4 8.5 13.5 10.2 L9.8 13.7 H17.1"/><path d="M18.7 11.4 C19.5 11 20.5 10.8 21.5 10.8 C23.6 10.8 25 11.9 25 13.7 C25 15.5 23.6 16.7 21.4 16.7 H20.5 M21.4 16.7 C23.9 16.7 25.4 17.9 25.4 19.8 C25.4 21.8 23.8 23 21.6 23 C20.3 23 19.2 22.7 18.4 22.2"/></g></svg>
<div style="left:501.00px;top:480.00px;width:19.40px;height:19.40px;background:#fff;border:1.6px solid #757575;border-radius:4px;box-sizing:border-box"></div>
<div style="left:648.30px;top:480.00px;width:19.40px;height:19.40px;background:#fff;border:1.6px solid #757575;border-radius:4px;box-sizing:border-box"></div>
<div style="left:805.50px;top:480.00px;width:19.40px;height:19.40px;background:#fff;border:1.6px solid #757575;border-radius:4px;box-sizing:border-box"></div>
<div style="left:1078.30px;top:480.00px;width:19.40px;height:19.40px;background:#fff;border:1.6px solid #757575;border-radius:4px;box-sizing:border-box"></div>
<div style="left:1207.80px;top:480.00px;width:19.40px;height:19.40px;background:#fff;border:1.6px solid #757575;border-radius:4px;box-sizing:border-box"></div>
<div style="left:1400.00px;top:481.00px;width:18.20px;height:18.00px;background:#707070;border-radius:3.5px"></div>
<svg style="left:1400.00px;top:481.00px;" width="18" height="18" viewBox="0 0 18 18" fill="none"><path d="M4 9.3 L7.4 12.6 L14.2 5.3" stroke="#fff" stroke-width="2.2" fill="none" stroke-linecap="round" stroke-linejoin="round"/></svg>
<svg style="left:1444.00px;top:506.00px;" width="32" height="32" viewBox="0 0 32 32" fill="none"><path d="M3.8 29.3 L6.5 21.2 L21 6.8 C22.5 5.3 24.8 5.3 26.2 6.7 C27.6 8.1 27.6 10.4 26.1 11.9 L11.3 26.3 Z" fill="#f7f7f7" stroke="#333" stroke-width="1.4" stroke-linejoin="round"/><path d="M6.5 21.2 C8.6 21.8 10.6 24 11.3 26.3 M21 6.8 C22.9 7.4 25 9.6 25.8 12" stroke="#333" stroke-width="1.3" fill="none"/></svg>
<svg style="left:1444.00px;top:538.00px;" width="32" height="31" viewBox="0 0 32 31" fill="none"><path d="M11.7 20 C9.2 18 7.4 15.5 7.4 12.6 C7.4 7.9 11.2 4.2 15.9 4.2 C20.6 4.2 24.4 7.9 24.4 12.6 C24.4 15.5 22.6 18 20.1 20 L20 25.5 C20 26.8 19 27.6 17.8 27.6 H14 C12.8 27.6 11.8 26.8 11.8 25.5 Z M12 22.8 H19.8" fill="#fff" stroke="#333" stroke-width="1.4" stroke-linejoin="round"/></svg>
<svg style="left:1444.00px;top:569.50px;" width="32" height="31" viewBox="0 0 32 31" fill="none"><path d="M11.7 20 C9.2 18 7.4 15.5 7.4 12.6 C7.4 7.9 11.2 4.2 15.9 4.2 C20.6 4.2 24.4 7.9 24.4 12.6 C24.4 15.5 22.6 18 20.1 20 L20 25.5 C20 26.8 19 27.6 17.8 27.6 H14 C12.8 27.6 11.8 26.8 11.8 25.5 Z M12 22.8 H19.8" fill="#fff" stroke="#333" stroke-width="1.4" stroke-linejoin="round"/></svg>
<svg style="left:1444.00px;top:601.00px;" width="32" height="31" viewBox="0 0 32 31" fill="none"><path d="M11.7 20 C9.2 18 7.4 15.5 7.4 12.6 C7.4 7.9 11.2 4.2 15.9 4.2 C20.6 4.2 24.4 7.9 24.4 12.6 C24.4 15.5 22.6 18 20.1 20 L20 25.5 C20 26.8 19 27.6 17.8 27.6 H14 C12.8 27.6 11.8 26.8 11.8 25.5 Z M12 22.8 H19.8" fill="#fff" stroke="#333" stroke-width="1.4" stroke-linejoin="round"/></svg>
<svg style="left:1444.00px;top:632.50px;" width="32" height="31" viewBox="0 0 32 31" fill="none"><path d="M11.7 20 C9.2 18 7.4 15.5 7.4 12.6 C7.4 7.9 11.2 4.2 15.9 4.2 C20.6 4.2 24.4 7.9 24.4 12.6 C24.4 15.5 22.6 18 20.1 20 L20 25.5 C20 26.8 19 27.6 17.8 27.6 H14 C12.8 27.6 11.8 26.8 11.8 25.5 Z M12 22.8 H19.8" fill="#fff" stroke="#333" stroke-width="1.4" stroke-linejoin="round"/></svg>
<svg style="left:1444.00px;top:664.00px;" width="32" height="31" viewBox="0 0 32 31" fill="none"><path d="M11.7 20 C9.2 18 7.4 15.5 7.4 12.6 C7.4 7.9 11.2 4.2 15.9 4.2 C20.6 4.2 24.4 7.9 24.4 12.6 C24.4 15.5 22.6 18 20.1 20 L20 25.5 C20 26.8 19 27.6 17.8 27.6 H14 C12.8 27.6 11.8 26.8 11.8 25.5 Z M12 22.8 H19.8" fill="#fff" stroke="#333" stroke-width="1.4" stroke-linejoin="round"/></svg>
<svg style="left:1444.00px;top:695.50px;" width="32" height="31" viewBox="0 0 32 31" fill="none"><path d="M11.7 20 C9.2 18 7.4 15.5 7.4 12.6 C7.4 7.9 11.2 4.2 15.9 4.2 C20.6 4.2 24.4 7.9 24.4 12.6 C24.4 15.5 22.6 18 20.1 20 L20 25.5 C20 26.8 19 27.6 17.8 27.6 H14 C12.8 27.6 11.8 26.8 11.8 25.5 Z M12 22.8 H19.8" fill="#fff" stroke="#333" stroke-width="1.4" stroke-linejoin="round"/></svg>
<svg style="left:1444.00px;top:727.00px;" width="32" height="31" viewBox="0 0 32 31" fill="none"><path d="M11.7 20 C9.2 18 7.4 15.5 7.4 12.6 C7.4 7.9 11.2 4.2 15.9 4.2 C20.6 4.2 24.4 7.9 24.4 12.6 C24.4 15.5 22.6 18 20.1 20 L20 25.5 C20 26.8 19 27.6 17.8 27.6 H14 C12.8 27.6 11.8 26.8 11.8 25.5 Z M12 22.8 H19.8" fill="#fff" stroke="#333" stroke-width="1.4" stroke-linejoin="round"/></svg>
<svg style="left:1444.00px;top:758.50px;" width="32" height="31" viewBox="0 0 32 31" fill="none"><path d="M11.7 20 C9.2 18 7.4 15.5 7.4 12.6 C7.4 7.9 11.2 4.2 15.9 4.2 C20.6 4.2 24.4 7.9 24.4 12.6 C24.4 15.5 22.6 18 20.1 20 L20 25.5 C20 26.8 19 27.6 17.8 27.6 H14 C12.8 27.6 11.8 26.8 11.8 25.5 Z M12 22.8 H19.8" fill="#fff" stroke="#333" stroke-width="1.4" stroke-linejoin="round"/></svg>
<svg style="left:1444.00px;top:790.00px;" width="32" height="31" viewBox="0 0 32 31" fill="none"><path d="M11.7 20 C9.2 18 7.4 15.5 7.4 12.6 C7.4 7.9 11.2 4.2 15.9 4.2 C20.6 4.2 24.4 7.9 24.4 12.6 C24.4 15.5 22.6 18 20.1 20 L20 25.5 C20 26.8 19 27.6 17.8 27.6 H14 C12.8 27.6 11.8 26.8 11.8 25.5 Z M12 22.8 H19.8" fill="#fff" stroke="#333" stroke-width="1.4" stroke-linejoin="round"/></svg>
<svg style="left:1444.00px;top:821.50px;" width="32" height="31" viewBox="0 0 32 31" fill="none"><path d="M11.7 20 C9.2 18 7.4 15.5 7.4 12.6 C7.4 7.9 11.2 4.2 15.9 4.2 C20.6 4.2 24.4 7.9 24.4 12.6 C24.4 15.5 22.6 18 20.1 20 L20 25.5 C20 26.8 19 27.6 17.8 27.6 H14 C12.8 27.6 11.8 26.8 11.8 25.5 Z M12 22.8 H19.8" fill="#fff" stroke="#333" stroke-width="1.4" stroke-linejoin="round"/></svg>
<svg style="left:1444.00px;top:853.00px;" width="32" height="31" viewBox="0 0 32 31" fill="none"><path d="M11.7 20 C9.2 18 7.4 15.5 7.4 12.6 C7.4 7.9 11.2 4.2 15.9 4.2 C20.6 4.2 24.4 7.9 24.4 12.6 C24.4 15.5 22.6 18 20.1 20 L20 25.5 C20 26.8 19 27.6 17.8 27.6 H14 C12.8 27.6 11.8 26.8 11.8 25.5 Z M12 22.8 H19.8" fill="#fff" stroke="#333" stroke-width="1.4" stroke-linejoin="round"/></svg>
<svg style="left:1444.00px;top:884.50px;" width="32" height="31" viewBox="0 0 32 31" fill="none"><path d="M11.7 20 C9.2 18 7.4 15.5 7.4 12.6 C7.4 7.9 11.2 4.2 15.9 4.2 C20.6 4.2 24.4 7.9 24.4 12.6 C24.4 15.5 22.6 18 20.1 20 L20 25.5 C20 26.8 19 27.6 17.8 27.6 H14 C12.8 27.6 11.8 26.8 11.8 25.5 Z M12 22.8 H19.8" fill="#fff" stroke="#333" stroke-width="1.4" stroke-linejoin="round"/></svg>
<svg style="left:1444.00px;top:916.00px;" width="32" height="31" viewBox="0 0 32 31" fill="none"><path d="M11.7 20 C9.2 18 7.4 15.5 7.4 12.6 C7.4 7.9 11.2 4.2 15.9 4.2 C20.6 4.2 24.4 7.9 24.4 12.6 C24.4 15.5 22.6 18 20.1 20 L20 25.5 C20 26.8 19 27.6 17.8 27.6 H14 C12.8 27.6 11.8 26.8 11.8 25.5 Z M12 22.8 H19.8" fill="#fff" stroke="#333" stroke-width="1.4" stroke-linejoin="round"/></svg>
<svg style="left:1444.00px;top:947.50px;" width="32" height="31" viewBox="0 0 32 31" fill="none"><path d="M11.7 20 C9.2 18 7.4 15.5 7.4 12.6 C7.4 7.9 11.2 4.2 15.9 4.2 C20.6 4.2 24.4 7.9 24.4 12.6 C24.4 15.5 22.6 18 20.1 20 L20 25.5 C20 26.8 19 27.6 17.8 27.6 H14 C12.8 27.6 11.8 26.8 11.8 25.5 Z M12 22.8 H19.8" fill="#fff" stroke="#333" stroke-width="1.4" stroke-linejoin="round"/></svg>
<svg style="left:1444.00px;top:979.00px;" width="32" height="31" viewBox="0 0 32 31" fill="none"><path d="M11.7 20 C9.2 18 7.4 15.5 7.4 12.6 C7.4 7.9 11.2 4.2 15.9 4.2 C20.6 4.2 24.4 7.9 24.4 12.6 C24.4 15.5 22.6 18 20.1 20 L20 25.5 C20 26.8 19 27.6 17.8 27.6 H14 C12.8 27.6 11.8 26.8 11.8 25.5 Z M12 22.8 H19.8" fill="#fff" stroke="#333" stroke-width="1.4" stroke-linejoin="round"/></svg>
<svg style="left:1444.00px;top:1010.50px;" width="32" height="31" viewBox="0 0 32 31" fill="none"><path d="M11.7 20 C9.2 18 7.4 15.5 7.4 12.6 C7.4 7.9 11.2 4.2 15.9 4.2 C20.6 4.2 24.4 7.9 24.4 12.6 C24.4 15.5 22.6 18 20.1 20 L20 25.5 C20 26.8 19 27.6 17.8 27.6 H14 C12.8 27.6 11.8 26.8 11.8 25.5 Z M12 22.8 H19.8" fill="#fff" stroke="#333" stroke-width="1.4" stroke-linejoin="round"/></svg>
<svg style="left:1444.00px;top:1042.00px;" width="32" height="31" viewBox="0 0 32 31" fill="none"><path d="M11.7 20 C9.2 18 7.4 15.5 7.4 12.6 C7.4 7.9 11.2 4.2 15.9 4.2 C20.6 4.2 24.4 7.9 24.4 12.6 C24.4 15.5 22.6 18 20.1 20 L20 25.5 C20 26.8 19 27.6 17.8 27.6 H14 C12.8 27.6 11.8 26.8 11.8 25.5 Z M12 22.8 H19.8" fill="#fff" stroke="#333" stroke-width="1.4" stroke-linejoin="round"/></svg>
<svg style="left:1444.00px;top:1073.50px;" width="32" height="31" viewBox="0 0 32 31" fill="none"><path d="M11.7 20 C9.2 18 7.4 15.5 7.4 12.6 C7.4 7.9 11.2 4.2 15.9 4.2 C20.6 4.2 24.4 7.9 24.4 12.6 C24.4 15.5 22.6 18 20.1 20 L20 25.5 C20 26.8 19 27.6 17.8 27.6 H14 C12.8 27.6 11.8 26.8 11.8 25.5 Z M12 22.8 H19.8" fill="#fff" stroke="#333" stroke-width="1.4" stroke-linejoin="round"/></svg>
<svg style="left:1444.00px;top:1105.00px;" width="32" height="31" viewBox="0 0 32 31" fill="none"><path d="M11.7 20 C9.2 18 7.4 15.5 7.4 12.6 C7.4 7.9 11.2 4.2 15.9 4.2 C20.6 4.2 24.4 7.9 24.4 12.6 C24.4 15.5 22.6 18 20.1 20 L20 25.5 C20 26.8 19 27.6 17.8 27.6 H14 C12.8 27.6 11.8 26.8 11.8 25.5 Z M12 22.8 H19.8" fill="#fff" stroke="#333" stroke-width="1.4" stroke-linejoin="round"/></svg>
<svg style="left:40.00px;top:104.00px;" width="60" height="50" viewBox="0 0 60 50" fill="none"><g stroke-width="1.5" fill="none"><path d="M37.1 12.2 H57.2 V43.7 H16.8 V35.4" stroke="#cacaca"/><path d="M43.7 22.7 H57.2 M43.7 33.4 H57.2 M20.5 33.4 H30.1" stroke="#cacaca"/><path d="M37.1 12.2 H43.7 V43.7 H30.1 V21 Z" fill="#e1eefa" stroke="#bcd9f0"/><path d="M30.1 22.7 H43.7 M30.1 33.4 H43.7" stroke="#bcd9f0"/><path d="M22.5 4.4 H31.9 L24.5 15.1 H32.3 L16.2 33.6 H13.5 L20.5 19.9 H13.5 Z" fill="#fdf5e3" stroke="#f5cfa6" stroke-linejoin="miter"/></g></svg>
<svg style="left:136.00px;top:104.00px;" width="60" height="56" viewBox="0 0 60 56" fill="none"><g stroke-width="1.5" fill="none"><path d="M35.7 12 H49.4 V28 M29 44 H8.5 V12 H22.1 M8.5 22.6 H22.1 M35.7 22.6 H49.4 M8.5 33.1 H22.1" stroke="#cacaca"/><path d="M22.1 12 H35.7 V26 L29 33 V44 H22.1 Z" fill="#e1eefa" stroke="#bcd9f0"/><path d="M22.1 22.6 H35.7 M22.1 33.1 H30" stroke="#bcd9f0"/><path d="M42.48 28.00 L45.53 28.82 L46.50 32.70 L48.20 34.40 L52.08 35.37 L52.90 38.42 L50.02 41.20 L49.40 43.52 L50.50 47.37 L48.27 49.60 L44.42 48.50 L42.10 49.12 L39.32 52.00 L36.27 51.18 L35.30 47.30 L33.60 45.60 L29.72 44.63 L28.90 41.58 L31.78 38.80 L32.40 36.48 L31.30 32.63 L33.53 30.40 L37.38 31.50 L39.70 30.88 Z" fill="#fff" stroke="#bcd9f0" stroke-linejoin="round"/><circle cx="40.9" cy="40" r="3.6" stroke="#bcd9f0"/></g></svg>
<svg style="left:228.00px;top:104.00px;" width="60" height="56" viewBox="0 0 60 56" fill="none"><g stroke-width="1.5" fill="none"><path d="M36.7 12 H50.5 V25 M50.5 22.6 H36.7 M23 44 H9.4 V12 H23 M9.4 22.6 H23 M9.4 33.1 H23" stroke="#cacaca"/><path d="M23 12 H36.7 V44 H23 Z M23 22.6 H36.7 M23 33.1 H36.7" fill="#e1eefa" stroke="#bcd9f0"/></g><rect x="36.5" y="26" width="18" height="26" fill="#fff"/><text x="33" y="47.5" font-family="Liberation Serif" font-style="italic" font-size="27" fill="#cacaca">f</text><text x="41.5" y="47.2" font-family="Liberation Serif" font-style="italic" font-size="23" fill="#cacaca">x</text></svg>
<svg style="left:340.00px;top:108.00px;" width="56" height="52" viewBox="0 0 56 52" fill="none"><g stroke-width="1.5" fill="none"><path d="M33.9 7.4 H47.9 V26 M47.9 19.4 H33.9 M19.8 40.4 H6.2 V7.4 H19.8 M6.2 19.4 H19.8 M6.2 29.2 H19.8" stroke="#cacaca"/><path d="M19.8 7.4 H33.9 V29 H30 V40.4 H19.8 Z M19.8 19.4 H33.9 M19.8 29.2 H30" fill="#e1eefa" stroke="#bcd9f0"/><path d="M33.2 33.4 H51.1 M33.2 41.1 H51.1 M36.7 47.5 L47.2 27.1" stroke="#cacaca"/></g></svg>
<svg style="left:420.00px;top:106.00px;" width="34" height="32" viewBox="0 0 34 32" fill="none"><g stroke-width="1.3" fill="none"><path d="M13.4 6.5 H7.4 V27.2 H13.4 M7.4 13.4 H13.4 M7.4 20.3 H13.4" stroke="#cacaca"/><path d="M13.4 6.5 H21.7 V27.2 H13.4 Z M13.4 13.4 H21.7 M13.4 20.3 H21.7" fill="#e1eefa" stroke="#bcd9f0"/></g><text x="24.6" y="11.5" font-family="Liberation Sans" font-size="7.5" fill="#cacaca">1</text><text x="24.6" y="19.8" font-family="Liberation Sans" font-size="7.5" fill="#cacaca">2</text><text x="24.6" y="28" font-family="Liberation Sans" font-size="7.5" fill="#cacaca">3</text></svg>
<svg style="left:420.00px;top:145.00px;" width="34" height="32" viewBox="0 0 34 32" fill="none"><g stroke-width="1.3" fill="none"><path d="M13.4 6.7 H7.4 V27 H13.4 M7.4 13.6 H13.4 M7.4 20.5 H13.4" stroke="#cacaca"/><path d="M13.4 6.7 H21.7 V13.6 L20 20 H13.4 Z M13.4 13.6 H21" fill="#e1eefa" stroke="#bcd9f0"/><path d="M13.4 21.5 V27 H16" fill="#e1eefa" stroke="#bcd9f0"/><path d="M22.60 12.90 L24.54 17.93 L29.92 18.22 L25.74 21.62 L27.13 26.83 L22.60 23.90 L18.07 26.83 L19.46 21.62 L15.28 18.22 L20.66 17.93 Z" fill="#fdf5e3" stroke="#f5cfa6" stroke-linejoin="miter"/></g></svg>
<svg style="left:420.00px;top:186.00px;" width="34" height="28" viewBox="0 0 34 28" fill="none"><g stroke-width="1.4" fill="none" stroke="#cacaca"><path d="M8.8 19.3 V6.3 H24.5 V9"/><rect x="13.4" y="11" width="16.1" height="12.4" fill="#fff"/></g></svg>
<svg style="left:624.00px;top:106.00px;" width="60" height="56" viewBox="0 0 60 56" fill="none"><g stroke-width="1.3" fill="none"><path d="M8.3 8.8 H52.2 V16 M52.2 30 V42.9 H38 M22 42.9 H8.3 V8.8" stroke="#cacaca"/><rect x="6.3" y="6.8" width="4" height="4" fill="#cacaca"/><rect x="50.2" y="6.8" width="4" height="4" fill="#cacaca"/><rect x="6.3" y="40.9" width="4" height="4" fill="#cacaca"/><rect x="50.2" y="40.9" width="4" height="4" fill="#cacaca"/><path d="M21.5 36.5 L28.3 15.2 L35.3 36.5 M24.2 28.5 H32.5" stroke="#cacaca"/><path d="M23.1 49.4 L26.3 40.6 L47.6 19.3 C49 17.9 51.2 17.9 52.6 19.3 C54 20.7 54 22.9 52.6 24.3 L31.3 45.6 Z" fill="#fff" stroke="#bcd9f0" stroke-linejoin="round"/><path d="M23.1 49.4 L26.3 40.6 C28.5 41.3 30.5 43.3 31.3 45.6 Z" fill="#e1eefa" stroke="#bcd9f0"/><path d="M47.6 19.3 C49.5 20 51.6 22 52.3 24.2" stroke="#bcd9f0"/></g></svg>
<svg style="left:694.00px;top:108.00px;" width="28" height="30" viewBox="0 0 28 30" fill="none"><g stroke-width="1.3" fill="none"><rect x="11.3" y="3.1" width="5.5" height="23.5" fill="#e1eefa" stroke="#bcd9f0"/><path d="M2.5 8.2 H9 M6.2 5.2 L9 8.2 L6.2 11.2 M25.6 8.2 H19 M21.8 5.2 L19 8.2 L21.8 11.2" stroke="#bcd9f0"/><path d="M5.3 26.6 V15 H9.4 M22.8 26.6 V15 H18.2" stroke="#cacaca"/></g></svg>
<svg style="left:694.00px;top:148.00px;" width="30" height="28" viewBox="0 0 30 28" fill="none"><text x="2.3" y="10.6" font-family="Liberation Sans" font-size="11.5" fill="#cacaca" stroke="#cacaca" stroke-width="0.4" textLength="22.6">ABC</text><text x="2.3" y="25.9" font-family="Liberation Sans" font-size="15" fill="#cacaca" textLength="22.5">123</text></svg>
<svg style="left:694.00px;top:187.00px;" width="30" height="28" viewBox="0 0 30 28" fill="none"><text x="2.8" y="11.6" font-family="Liberation Sans" font-size="12.5" fill="#cacaca" textLength="19">abc</text><g stroke-width="1.3" fill="none"><path d="M3.5 14.5 C3.5 18 6 20.5 10 20.5 H14 M11.5 17.7 L14.3 20.5 L11.5 23.3" stroke="#bcd9f0"/><rect x="12.6" y="16" width="13.4" height="9.6" fill="#fff" stroke="#cacaca"/><path d="M12.6 19.2 H26 M12.6 22.4 H26 M17 19.2 V25.6" stroke="#cacaca"/></g></svg>
<svg style="left:860.00px;top:104.00px;" width="56" height="56" viewBox="0 0 56 56" fill="none"><g stroke-width="1.4" fill="none" stroke="#cacaca"><path d="M31.6 31.6 L24.1 13.6 M31.6 31.6 L43.8 12.2 M31.6 31.6 L12.1 33.1 M31.6 31.6 L43.8 43.5"/><circle cx="24.1" cy="13.6" r="4.6" fill="#fff"/><circle cx="43.8" cy="12.2" r="4.6" fill="#fff"/><circle cx="12.1" cy="33.1" r="4.6" fill="#fff"/><circle cx="43.8" cy="43.5" r="4.6" fill="#fff"/><circle cx="31.6" cy="31.6" r="6.1" fill="#e1eefa" stroke="#bcd9f0"/></g></svg>
<svg style="left:955.00px;top:108.00px;" width="50" height="50" viewBox="0 0 50 50" fill="none"><g stroke-width="1.5" fill="none" stroke="#cacaca"><path d="M6 3.8 H22.5 M7.2 6.5 L20.5 23.5 M20.5 6.5 L7.2 23.5"/><path d="M44.2 6.8 H32.8 C28.6 6.8 26.3 10.5 26.3 15 C26.3 20 29 23.6 33 23.6 C37 23.6 39.6 20 39.6 15 C39.6 10.8 37.5 7.6 34.5 6.8"/><path d="M31.3 27.5 H17.8 L25.3 36.2 L17.8 44.6 H31.5"/></g></svg>
<svg style="left:1030.00px;top:104.00px;" width="50" height="50" viewBox="0 0 50 50" fill="none"><g stroke-width="1.4" fill="none" stroke="#cacaca"><path d="M24.3 7 V47.5 M4.2 27.3 H44.7"/><path d="M7.3 16.7 H20.5 M13.9 10.1 V23.3 M28.2 16.7 H41.4"/><path d="M8.4 31.9 L19.4 42.9 M19.4 31.9 L8.4 42.9 M28.2 37.6 H42.8"/></g><circle cx="35.5" cy="33.4" r="1.8" fill="#cacaca"/><circle cx="35.5" cy="42.1" r="1.8" fill="#cacaca"/></svg>
<svg style="left:1100.00px;top:104.00px;" width="60" height="50" viewBox="0 0 60 50" fill="none"><g stroke-width="1.9" fill="none" stroke="#cacaca"><path d="M10.5 17.2 L17.7 13.6 V41.6"/><ellipse cx="32.5" cy="27.6" rx="7.6" ry="13.6"/></g><g stroke-width="1.3" fill="none" stroke="#cacaca"><path d="M43.6 10.3 C44 8 45.3 7 47.2 7 C49.4 7 50.9 8.4 50.9 10.4 C50.9 12.5 49.5 14 47.6 15.9 L43.5 21.6 H51.8"/></g></svg>
<svg style="left:1176.00px;top:108.00px;" width="32" height="32" viewBox="0 0 32 32" fill="none"><g stroke-width="1.3" fill="none" stroke="#cacaca"><path d="M4.5 26.6 L27.5 4 V26.6 Z"/><path d="M21.4 26.6 V20.5 H27.5"/><path d="M9.8 21.6 C11.3 22.8 12 24.6 12 26.6"/></g></svg>
<svg style="left:1176.00px;top:146.00px;" width="32" height="32" viewBox="0 0 32 32" fill="none"><text x="7.4" y="14.4" font-family="Liberation Sans" font-size="13" fill="#cacaca" textLength="19">.00</text><text x="13.2" y="26.4" font-family="Liberation Sans" font-size="13" fill="#cacaca" textLength="13">.0</text><path d="M4 21 H16.5 M13.3 17.8 L16.5 21 L13.3 24.2" stroke="#bcd9f0" stroke-width="1.3" fill="none"/></svg>
<svg style="left:1176.00px;top:185.00px;" width="32" height="32" viewBox="0 0 32 32" fill="none"><g stroke-width="1.3" fill="none" stroke="#cacaca"><path d="M15.3 4.1 V26.2 M4 14.9 H26.6 M17.6 9.1 H24.7 M17.4 21 H24.7 M21 17.4 V24.6"/></g><text x="7.2" y="12.6" font-family="Liberation Sans" font-size="9.5" fill="#cacaca">1</text><text x="6.3" y="24.8" font-family="Liberation Sans" font-size="9.5" fill="#cacaca">3</text></svg>
<svg style="left:1340.00px;top:100.00px;" width="80" height="60" viewBox="0 0 80 60" fill="none"><g stroke-width="1.4" fill="none" stroke="#cacaca"><rect x="31.7" y="16.5" width="40.6" height="37.6"/><path d="M31.7 24.3 H72.3 M39 12.8 V20 M64.5 12.8 V20"/></g><rect x="44.3" y="27.9" width="2.6" height="2.6" fill="#cacaca"/><rect x="50.4" y="27.9" width="2.6" height="2.6" fill="#cacaca"/><rect x="56.5" y="27.9" width="2.6" height="2.6" fill="#cacaca"/><rect x="62.6" y="27.9" width="2.6" height="2.6" fill="#cacaca"/><rect x="38.3" y="34.0" width="2.6" height="2.6" fill="#cacaca"/><rect x="44.3" y="34.0" width="2.6" height="2.6" fill="#cacaca"/><rect x="50.4" y="34.0" width="2.6" height="2.6" fill="#cacaca"/><rect x="56.5" y="34.0" width="2.6" height="2.6" fill="#cacaca"/><rect x="62.6" y="34.0" width="2.6" height="2.6" fill="#cacaca"/><rect x="38.3" y="40.1" width="2.6" height="2.6" fill="#cacaca"/><rect x="44.3" y="40.1" width="2.6" height="2.6" fill="#cacaca"/><rect x="50.4" y="40.1" width="2.6" height="2.6" fill="#cacaca"/><rect x="56.5" y="40.1" width="2.6" height="2.6" fill="#cacaca"/><rect x="62.6" y="40.1" width="2.6" height="2.6" fill="#cacaca"/><rect x="38.3" y="46.2" width="2.6" height="2.6" fill="#cacaca"/><rect x="44.3" y="46.2" width="2.6" height="2.6" fill="#cacaca"/><rect x="50.4" y="46.2" width="2.6" height="2.6" fill="#cacaca"/><rect x="56.5" y="46.2" width="2.6" height="2.6" fill="#cacaca"/></svg>
<svg style="left:1420.00px;top:100.00px;" width="60" height="60" viewBox="0 0 60 60" fill="none"><g stroke-width="1.4" fill="none" stroke="#cacaca"><circle cx="32" cy="34.1" r="20.3"/><path d="M30.8 20.7 V36.3 H43.6"/></g></svg>
<svg style="left:1490.00px;top:100.00px;" width="60" height="60" viewBox="0 0 60 60" fill="none"><g stroke-width="1.4" fill="none" stroke="#cacaca"><circle cx="29" cy="37.1" r="17.3"/><path d="M28 25.6 V36.3 H38 M22.9 13.4 H35 M29 13.4 V19.8 M41.7 21.9 L44.8 18.9"/></g></svg>
<svg style="left:826.00px;top:8.00px;" width="32" height="32" viewBox="0 0 32 32" fill="none"><circle cx="19.5" cy="12" r="7.3" stroke="#424242" stroke-width="1.5" fill="none"/><path d="M14.3 17.2 L5 26.5" stroke="#424242" stroke-width="1.6" stroke-linecap="round"/></svg>
<svg style="left:46.00px;top:336.00px;" width="30" height="30" viewBox="0 0 30 30" fill="none"><rect x="2.3" y="2.8" width="25.5" height="25.2" fill="#fff" stroke="#7a7a7a" stroke-width="1.4"/><rect x="3" y="3.5" width="24.1" height="3.6" fill="#c8c8c8"/><path d="M2.3 7.5 H27.8 M2.3 14.3 H27.8 M2.3 21.1 H27.8 M10.8 7.5 V28 M19.3 7.5 V28" stroke="#7a7a7a" stroke-width="1.2" fill="none"/></svg>
<svg style="left:336.00px;top:274.00px;" width="40" height="36" viewBox="0 0 40 36" fill="none"><g stroke-width="1.5" fill="none"><path d="M21.8 8.5 H33 V31.3 H6.8 V24.5" stroke="#333"/><path d="M24 16.2 H33 M24 23.6 H33 M9.5 23.6 H16.2" stroke="#555"/><path d="M21.8 8.5 H24 V31.3 H16.2 V15.7 Z" fill="#8bbfeb" stroke="#0f6cbd"/><path d="M16.2 16.2 H24 M16.2 23.6 H24" stroke="#0f6cbd"/><path d="M9.7 5.3 H17.8 L13.8 11.3 H16.5 L6.8 22.5 H5.3 L8 13.5 H5.3 Z" fill="#f8d775" stroke="#e8730c" stroke-linejoin="miter"/></g></svg>
<svg style="left:1884.00px;top:562.00px;" width="32" height="34" viewBox="0 0 32 34" fill="none"><text x="3" y="24" font-family="Liberation Serif" font-style="italic" font-size="28" fill="#6e6e6e" stroke="#6e6e6e" stroke-width="0.4">f</text><text x="12" y="24.5" font-family="Liberation Serif" font-style="italic" font-size="24" fill="#6e6e6e" stroke="#6e6e6e" stroke-width="0.4">x</text></svg>
<svg style="left:2134.00px;top:566.00px;" width="26" height="28" viewBox="0 0 26 28" fill="none"><g stroke="#8a8a8a" stroke-width="1.3" fill="none"><ellipse cx="10.5" cy="6.8" rx="7.8" ry="2.9"/><path d="M2.7 6.8 V21.5 C2.7 23 5 24.2 9 24.4 M18.3 6.8 V14.5"/><circle cx="18.5" cy="20.3" r="5" fill="#f3f2f1"/><path d="M16 20.3 H21"/></g></svg>
<svg style="left:1915.00px;top:1152.00px;" width="36" height="34" viewBox="0 0 36 34" fill="none"><g stroke="#7a7a7a" stroke-width="1.4" fill="none" stroke-linejoin="round"><path d="M9.8 27.5 V9 C9.8 7.2 10.8 6.2 12.5 6.2 H27.5 C29.2 6.2 30 7.3 30 9 V12 H26.3 M26.3 8.5 V27.2 C26.3 28.5 25.3 29.3 24 29.3 H9 C7.3 29.3 6.2 28.5 6.2 27 V24.4 H20.8 V27.2 C20.8 28.4 21.6 29.3 22.8 29.3"/></g></svg>
<div class="t" style="left:1951.70px;top:1160.40px;font-size:18px;color:#6e6e6e;transform:scaleX(0.9236);transform-origin:0 0;">Step</div>
<svg style="left:2026.00px;top:1154.00px;" width="32" height="32" viewBox="0 0 32 32" fill="none"><g stroke="#7a7a7a" stroke-width="1.4" fill="none"><rect x="4.2" y="4.4" width="8.6" height="6"/><rect x="4.2" y="19.6" width="8.6" height="6.4"/><path d="M12.8 7.4 H15.3 V22.8 H12.8 M15.3 15.2 H19.2"/></g><rect x="19.5" y="11.8" width="8.3" height="6.6" fill="#a9d3f5" stroke="#3f8fd8" stroke-width="1.3"/></svg>
<svg style="left:2096.00px;top:1155.00px;" width="30" height="30" viewBox="0 0 30 30" fill="none"><rect x="3.8" y="3.8" width="23" height="22.4" fill="#fff" stroke="#7a7a7a" stroke-width="1.5"/><rect x="4.5" y="4.5" width="21.6" height="3.4" fill="#cfcfcf"/><path d="M3.8 8.2 H26.8 M3.8 14.2 H26.8 M3.8 20.2 H26.8 M11.5 8.2 V26.2 M19 8.2 V26.2" stroke="#7a7a7a" stroke-width="1.2" fill="none"/></svg>
<svg style="left:2150.00px;top:1155.00px;" width="30" height="30" viewBox="0 0 30 30" fill="none"><rect x="3.8" y="3.8" width="23" height="22.4" fill="#fff" stroke="#7a7a7a" stroke-width="1.5"/><rect x="4.5" y="4.5" width="21.6" height="3.4" fill="#cfcfcf"/><path d="M3.8 8.2 H26.8 M11.5 8.2 V26.2 M19 8.2 V26.2" stroke="#7a7a7a" stroke-width="1.2" fill="none"/></svg></body></html>
